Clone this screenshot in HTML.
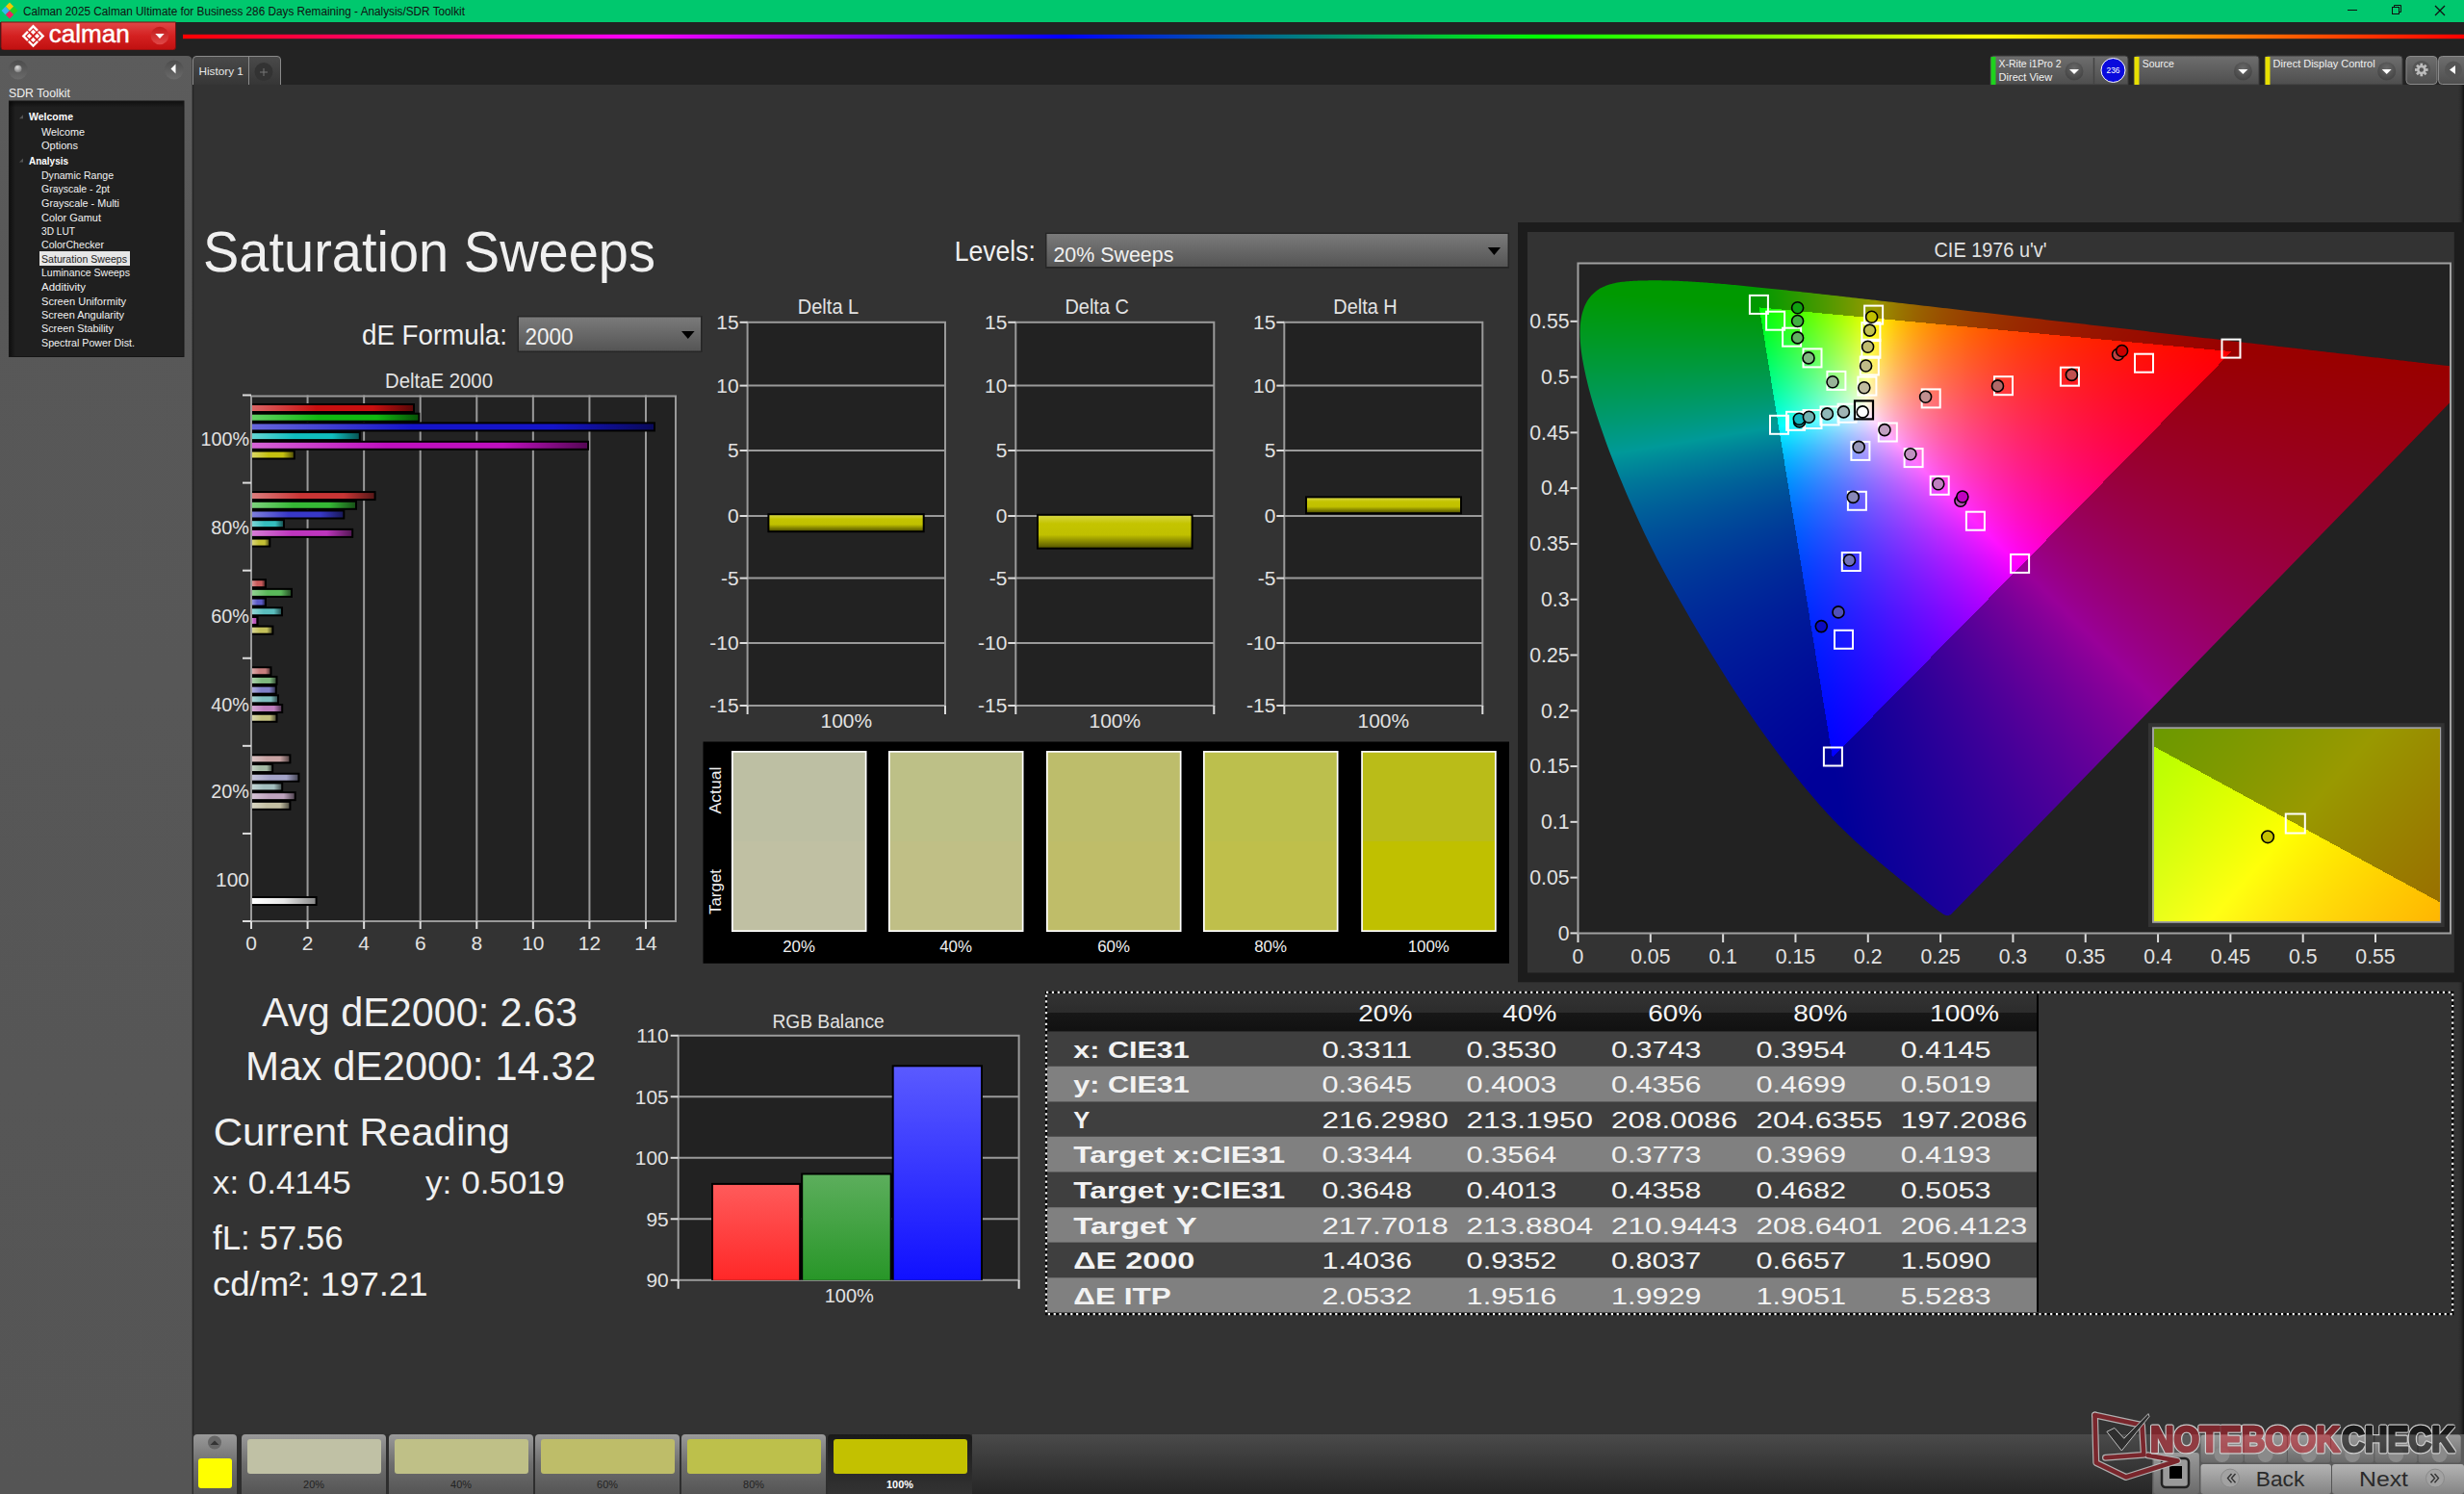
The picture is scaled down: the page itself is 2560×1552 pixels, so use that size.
<!DOCTYPE html>
<html><head><meta charset="utf-8"><title>Calman Saturation Sweeps</title>
<style>
html,body{margin:0;padding:0;background:#333;overflow:hidden;}
body{width:2560px;height:1552px;position:relative;font-family:"Liberation Sans", sans-serif;}
svg{position:absolute;left:0;top:0;}
svg text{font-family:"Liberation Sans", sans-serif;}
canvas{position:absolute;}
</style></head><body>
<svg width="2560" height="1552" viewBox="0 0 2560 1552">
<defs><linearGradient id="rainbow" x1="0" x2="1" y1="0" y2="0"><stop offset="0" stop-color="#ff0000"/><stop offset="0.201" stop-color="#ff00ff"/><stop offset="0.386" stop-color="#0000ff"/><stop offset="0.596" stop-color="#00ff00"/><stop offset="0.792" stop-color="#ffff00"/><stop offset="1" stop-color="#ff0000"/></linearGradient><linearGradient id="logo" x1="0" x2="0" y1="0" y2="1"><stop offset="0" stop-color="#e04848"/><stop offset="0.5" stop-color="#d42020"/><stop offset="1" stop-color="#c01010"/></linearGradient><linearGradient id="logodd" x1="0" x2="0" y1="0" y2="1"><stop offset="0" stop-color="#c01818"/><stop offset="1" stop-color="#e04848"/></linearGradient><linearGradient id="side" x1="0" x2="0" y1="0" y2="1"><stop offset="0" stop-color="#5c5c5c"/><stop offset="0.15" stop-color="#585858"/><stop offset="1" stop-color="#555555"/></linearGradient><linearGradient id="cbtn" x1="0" x2="0" y1="0" y2="1"><stop offset="0" stop-color="#4c4c4c"/><stop offset="1" stop-color="#6a6a6a"/></linearGradient><radialGradient id="ball" cx="0.4" cy="0.3" r="0.7"><stop offset="0" stop-color="#dedede"/><stop offset="1" stop-color="#7a7a7a"/></radialGradient><linearGradient id="tbsh" x1="0" x2="0" y1="0" y2="1"><stop offset="0" stop-color="#000" stop-opacity="0.5"/><stop offset="1" stop-color="#000" stop-opacity="0"/></linearGradient><linearGradient id="tbsl" x1="0" x2="1" y1="0" y2="0"><stop offset="0" stop-color="#000" stop-opacity="0.5"/><stop offset="1" stop-color="#000" stop-opacity="0"/></linearGradient><linearGradient id="tabg" x1="0" x2="0" y1="0" y2="1"><stop offset="0" stop-color="#4a4a4a"/><stop offset="1" stop-color="#363636"/></linearGradient><linearGradient id="redge" x1="0" x2="1" y1="0" y2="0"><stop offset="0" stop-color="#333" stop-opacity="0"/><stop offset="1" stop-color="#111"/></linearGradient><linearGradient id="ctl" x1="0" x2="0" y1="0" y2="1"><stop offset="0" stop-color="#6e6e6e"/><stop offset="1" stop-color="#4e4e4e"/></linearGradient><radialGradient id="ddc" cx="0.5" cy="0.35" r="0.6"><stop offset="0" stop-color="#6a6a6a"/><stop offset="1" stop-color="#454545"/></radialGradient><linearGradient id="dd" x1="0" x2="0" y1="0" y2="1"><stop offset="0" stop-color="#7a7a7a"/><stop offset="1" stop-color="#555555"/></linearGradient><linearGradient id="bg1" x1="0" x2="1" y1="0" y2="0"><stop offset="0" stop-color="#db6464"/><stop offset="0.4" stop-color="#c81010"/><stop offset="0.75" stop-color="#c81010"/><stop offset="1" stop-color="#5a0707"/></linearGradient><linearGradient id="bg2" x1="0" x2="1" y1="0" y2="0"><stop offset="0" stop-color="#64d164"/><stop offset="0.4" stop-color="#10b810"/><stop offset="0.75" stop-color="#10b810"/><stop offset="1" stop-color="#075307"/></linearGradient><linearGradient id="bg3" x1="0" x2="1" y1="0" y2="0"><stop offset="0" stop-color="#6666db"/><stop offset="0.4" stop-color="#1414c8"/><stop offset="0.75" stop-color="#1414c8"/><stop offset="1" stop-color="#09095a"/></linearGradient><linearGradient id="bg4" x1="0" x2="1" y1="0" y2="0"><stop offset="0" stop-color="#64d5d5"/><stop offset="0.4" stop-color="#10bebe"/><stop offset="0.75" stop-color="#10bebe"/><stop offset="1" stop-color="#075656"/></linearGradient><linearGradient id="bg5" x1="0" x2="1" y1="0" y2="0"><stop offset="0" stop-color="#d564d5"/><stop offset="0.4" stop-color="#be10be"/><stop offset="0.75" stop-color="#be10be"/><stop offset="1" stop-color="#560756"/></linearGradient><linearGradient id="bg6" x1="0" x2="1" y1="0" y2="0"><stop offset="0" stop-color="#d9d664"/><stop offset="0.4" stop-color="#c4c010"/><stop offset="0.75" stop-color="#c4c010"/><stop offset="1" stop-color="#585607"/></linearGradient><linearGradient id="bg7" x1="0" x2="1" y1="0" y2="0"><stop offset="0" stop-color="#db7c7c"/><stop offset="0.4" stop-color="#c83535"/><stop offset="0.75" stop-color="#c83535"/><stop offset="1" stop-color="#5a1818"/></linearGradient><linearGradient id="bg8" x1="0" x2="1" y1="0" y2="0"><stop offset="0" stop-color="#7cd17c"/><stop offset="0.4" stop-color="#35b835"/><stop offset="0.75" stop-color="#35b835"/><stop offset="1" stop-color="#185318"/></linearGradient><linearGradient id="bg9" x1="0" x2="1" y1="0" y2="0"><stop offset="0" stop-color="#7e7edb"/><stop offset="0.4" stop-color="#3838c8"/><stop offset="0.75" stop-color="#3838c8"/><stop offset="1" stop-color="#19195a"/></linearGradient><linearGradient id="bg10" x1="0" x2="1" y1="0" y2="0"><stop offset="0" stop-color="#7cd5d5"/><stop offset="0.4" stop-color="#35bebe"/><stop offset="0.75" stop-color="#35bebe"/><stop offset="1" stop-color="#185656"/></linearGradient><linearGradient id="bg11" x1="0" x2="1" y1="0" y2="0"><stop offset="0" stop-color="#d57cd5"/><stop offset="0.4" stop-color="#be35be"/><stop offset="0.75" stop-color="#be35be"/><stop offset="1" stop-color="#561856"/></linearGradient><linearGradient id="bg12" x1="0" x2="1" y1="0" y2="0"><stop offset="0" stop-color="#d9d67c"/><stop offset="0.4" stop-color="#c4c035"/><stop offset="0.75" stop-color="#c4c035"/><stop offset="1" stop-color="#585618"/></linearGradient><linearGradient id="bg13" x1="0" x2="1" y1="0" y2="0"><stop offset="0" stop-color="#db9393"/><stop offset="0.4" stop-color="#c85a5a"/><stop offset="0.75" stop-color="#c85a5a"/><stop offset="1" stop-color="#5a2828"/></linearGradient><linearGradient id="bg14" x1="0" x2="1" y1="0" y2="0"><stop offset="0" stop-color="#93d193"/><stop offset="0.4" stop-color="#5ab85a"/><stop offset="0.75" stop-color="#5ab85a"/><stop offset="1" stop-color="#285328"/></linearGradient><linearGradient id="bg15" x1="0" x2="1" y1="0" y2="0"><stop offset="0" stop-color="#9595db"/><stop offset="0.4" stop-color="#5c5cc8"/><stop offset="0.75" stop-color="#5c5cc8"/><stop offset="1" stop-color="#29295a"/></linearGradient><linearGradient id="bg16" x1="0" x2="1" y1="0" y2="0"><stop offset="0" stop-color="#93d5d5"/><stop offset="0.4" stop-color="#5abebe"/><stop offset="0.75" stop-color="#5abebe"/><stop offset="1" stop-color="#285656"/></linearGradient><linearGradient id="bg17" x1="0" x2="1" y1="0" y2="0"><stop offset="0" stop-color="#d593d5"/><stop offset="0.4" stop-color="#be5abe"/><stop offset="0.75" stop-color="#be5abe"/><stop offset="1" stop-color="#562856"/></linearGradient><linearGradient id="bg18" x1="0" x2="1" y1="0" y2="0"><stop offset="0" stop-color="#d9d693"/><stop offset="0.4" stop-color="#c4c05a"/><stop offset="0.75" stop-color="#c4c05a"/><stop offset="1" stop-color="#585628"/></linearGradient><linearGradient id="bg19" x1="0" x2="1" y1="0" y2="0"><stop offset="0" stop-color="#dbabab"/><stop offset="0.4" stop-color="#c87e7e"/><stop offset="0.75" stop-color="#c87e7e"/><stop offset="1" stop-color="#5a3939"/></linearGradient><linearGradient id="bg20" x1="0" x2="1" y1="0" y2="0"><stop offset="0" stop-color="#abd1ab"/><stop offset="0.4" stop-color="#7eb87e"/><stop offset="0.75" stop-color="#7eb87e"/><stop offset="1" stop-color="#395339"/></linearGradient><linearGradient id="bg21" x1="0" x2="1" y1="0" y2="0"><stop offset="0" stop-color="#acacdb"/><stop offset="0.4" stop-color="#8080c8"/><stop offset="0.75" stop-color="#8080c8"/><stop offset="1" stop-color="#3a3a5a"/></linearGradient><linearGradient id="bg22" x1="0" x2="1" y1="0" y2="0"><stop offset="0" stop-color="#abd5d5"/><stop offset="0.4" stop-color="#7ebebe"/><stop offset="0.75" stop-color="#7ebebe"/><stop offset="1" stop-color="#395656"/></linearGradient><linearGradient id="bg23" x1="0" x2="1" y1="0" y2="0"><stop offset="0" stop-color="#d5abd5"/><stop offset="0.4" stop-color="#be7ebe"/><stop offset="0.75" stop-color="#be7ebe"/><stop offset="1" stop-color="#563956"/></linearGradient><linearGradient id="bg24" x1="0" x2="1" y1="0" y2="0"><stop offset="0" stop-color="#d9d6ab"/><stop offset="0.4" stop-color="#c4c07e"/><stop offset="0.75" stop-color="#c4c07e"/><stop offset="1" stop-color="#585639"/></linearGradient><linearGradient id="bg25" x1="0" x2="1" y1="0" y2="0"><stop offset="0" stop-color="#dbc3c3"/><stop offset="0.4" stop-color="#c8a3a3"/><stop offset="0.75" stop-color="#c8a3a3"/><stop offset="1" stop-color="#5a4949"/></linearGradient><linearGradient id="bg26" x1="0" x2="1" y1="0" y2="0"><stop offset="0" stop-color="#c3d1c3"/><stop offset="0.4" stop-color="#a3b8a3"/><stop offset="0.75" stop-color="#a3b8a3"/><stop offset="1" stop-color="#495349"/></linearGradient><linearGradient id="bg27" x1="0" x2="1" y1="0" y2="0"><stop offset="0" stop-color="#c4c4db"/><stop offset="0.4" stop-color="#a4a4c8"/><stop offset="0.75" stop-color="#a4a4c8"/><stop offset="1" stop-color="#4a4a5a"/></linearGradient><linearGradient id="bg28" x1="0" x2="1" y1="0" y2="0"><stop offset="0" stop-color="#c3d5d5"/><stop offset="0.4" stop-color="#a3bebe"/><stop offset="0.75" stop-color="#a3bebe"/><stop offset="1" stop-color="#495656"/></linearGradient><linearGradient id="bg29" x1="0" x2="1" y1="0" y2="0"><stop offset="0" stop-color="#d5c3d5"/><stop offset="0.4" stop-color="#bea3be"/><stop offset="0.75" stop-color="#bea3be"/><stop offset="1" stop-color="#564956"/></linearGradient><linearGradient id="bg30" x1="0" x2="1" y1="0" y2="0"><stop offset="0" stop-color="#d9d6c3"/><stop offset="0.4" stop-color="#c4c0a3"/><stop offset="0.75" stop-color="#c4c0a3"/><stop offset="1" stop-color="#585649"/></linearGradient><linearGradient id="bgw" x1="0" x2="1" y1="0" y2="0"><stop offset="0" stop-color="#ffffff"/><stop offset="0.5" stop-color="#e6e6e6"/><stop offset="1" stop-color="#8a8a8a"/></linearGradient><linearGradient id="ybar" x1="0" x2="0" y1="0" y2="1"><stop offset="0" stop-color="#d6d640"/><stop offset="0.25" stop-color="#c4c400"/><stop offset="0.6" stop-color="#c0c000"/><stop offset="1" stop-color="#5a5a00"/></linearGradient><linearGradient id="rbr" x1="0" x2="0" y1="0" y2="1"><stop offset="0" stop-color="#ff5a5a"/><stop offset="1" stop-color="#ff2828"/></linearGradient><linearGradient id="rbg" x1="0" x2="0" y1="0" y2="1"><stop offset="0" stop-color="#5cae5c"/><stop offset="1" stop-color="#289628"/></linearGradient><linearGradient id="rbb" x1="0" x2="0" y1="0" y2="1"><stop offset="0" stop-color="#5a5aff"/><stop offset="1" stop-color="#1010ff"/></linearGradient><linearGradient id="thead" x1="0" x2="0" y1="0" y2="1"><stop offset="0" stop-color="#333"/><stop offset="0.5" stop-color="#2c2c2c"/><stop offset="0.52" stop-color="#171717"/><stop offset="1" stop-color="#111111"/></linearGradient><clipPath id="cieclip"><rect x="1640" y="274" width="906" height="695"/></clipPath><linearGradient id="fbout" x1="0" y1="0" x2="1" y2="1"><stop offset="0" stop-color="#009a10"/><stop offset="0.35" stop-color="#008a8a"/><stop offset="0.6" stop-color="#10009a"/><stop offset="1" stop-color="#9a0030"/></linearGradient><linearGradient id="fbr" gradientUnits="userSpaceOnUse" x1="2318.4" y1="365.1" x2="1865.8" y2="553.2"><stop offset="0" stop-color="#ff0000"/><stop offset="0.5" stop-color="#ff0000"/><stop offset="1" stop-color="#000"/></linearGradient><linearGradient id="fbg" gradientUnits="userSpaceOnUse" x1="1827.8" y1="319.4" x2="2111.1" y2="576.0"><stop offset="0" stop-color="#00ff00"/><stop offset="0.5" stop-color="#00ff00"/><stop offset="1" stop-color="#000"/></linearGradient><linearGradient id="fbb" gradientUnits="userSpaceOnUse" x1="1903.7" y1="786.9" x2="2073.1" y2="342.3"><stop offset="0" stop-color="#0000ff"/><stop offset="0.5" stop-color="#0000ff"/><stop offset="1" stop-color="#000"/></linearGradient><linearGradient id="fog" gradientUnits="userSpaceOnUse" x1="1650.0" y1="300.0" x2="2150.0" y2="700.0"><stop offset="0" stop-color="#009900"/><stop offset="0.35" stop-color="#009900"/><stop offset="1" stop-color="#000"/></linearGradient><linearGradient id="for" gradientUnits="userSpaceOnUse" x1="2546.0" y1="378.0" x2="1900.0" y2="600.0"><stop offset="0" stop-color="#990000"/><stop offset="0.35" stop-color="#990000"/><stop offset="1" stop-color="#000"/></linearGradient><linearGradient id="fob" gradientUnits="userSpaceOnUse" x1="2000.0" y1="900.0" x2="1750.0" y2="350.0"><stop offset="0" stop-color="#000099"/><stop offset="0.35" stop-color="#000099"/><stop offset="1" stop-color="#000"/></linearGradient><radialGradient id="fbw" gradientUnits="userSpaceOnUse" cx="1937.5" cy="428.2" r="90"><stop offset="0" stop-color="#fff" stop-opacity="0.9"/><stop offset="1" stop-color="#fff" stop-opacity="0"/></radialGradient><linearGradient id="insout" x1="0" y1="0" x2="1" y2="1"><stop offset="0" stop-color="#6a9a00"/><stop offset="0.5" stop-color="#949a00"/><stop offset="1" stop-color="#9a7400"/></linearGradient><linearGradient id="insin" x1="0" y1="0" x2="1" y2="1"><stop offset="0" stop-color="#b0ff00"/><stop offset="0.45" stop-color="#ffff10"/><stop offset="1" stop-color="#ffb000"/></linearGradient><linearGradient id="bstrip" x1="0" x2="0" y1="0" y2="1"><stop offset="0" stop-color="#3a3a3a"/><stop offset="1" stop-color="#262626"/></linearGradient><linearGradient id="tile" x1="0" x2="0" y1="0" y2="1"><stop offset="0" stop-color="#9a9a9a"/><stop offset="0.5" stop-color="#6e6e6e"/><stop offset="1" stop-color="#555"/></linearGradient><linearGradient id="tilesel" x1="0" x2="0" y1="0" y2="1"><stop offset="0" stop-color="#1a1a1a"/><stop offset="1" stop-color="#333"/></linearGradient><linearGradient id="brp" x1="0" x2="0" y1="0" y2="1"><stop offset="0" stop-color="#4a4a4a"/><stop offset="1" stop-color="#262626"/></linearGradient><linearGradient id="btn" x1="0" x2="0" y1="0" y2="1"><stop offset="0" stop-color="#b4b4b4"/><stop offset="1" stop-color="#848484"/></linearGradient><linearGradient id="sbtn" x1="0" x2="0" y1="0" y2="1"><stop offset="0" stop-color="#9a9a9a"/><stop offset="1" stop-color="#6a6a6a"/></linearGradient><mask id="nbm" maskUnits="userSpaceOnUse" x="2100" y="1440" width="460" height="112"><rect x="2100" y="1440" width="460" height="112" fill="#fff"/><text x="2234" y="1508.3" font-size="37.79" font-weight="bold" textLength="197" lengthAdjust="spacingAndGlyphs" fill="#000" stroke="#000" stroke-width="2.6">NOTEBOOK</text><text x="2433" y="1508.3" font-size="37.79" font-weight="bold" textLength="117" lengthAdjust="spacingAndGlyphs" fill="#000" stroke="#000" stroke-width="2.6">CHECK</text></mask></defs>
<rect x="0.00" y="0.00" width="2560.00" height="23.00" fill="#00c86e" />
<g transform="translate(10,11)"><path d="M0 -8.5 L4.2 -4.3 L0 -0.1 L-4.2 -4.3 Z" fill="#f5c800"/><path d="M-4.3 -4.2 L-0.1 0 L-4.3 4.2 L-8.5 0 Z" fill="#35b8f0"/><path d="M4.3 -4.2 L8.5 0 L4.3 4.2 L0.1 0 Z" fill="#22d022"/><path d="M0 0.1 L4.2 4.3 L0 8.5 L-4.2 4.3 Z" fill="#f02060"/></g>
<text x="24.00" y="15.60" font-size="12.50" fill="#111" text-anchor="start" textLength="459.00" lengthAdjust="spacingAndGlyphs" >Calman 2025 Calman Ultimate for Business 286 Days Remaining  - Analysis/SDR Toolkit</text>
<line x1="2439.00" y1="10.50" x2="2449.00" y2="10.50" stroke="#111" stroke-width="1" />
<rect x="2485.5" y="7.5" width="7" height="7" fill="none" stroke="#111" stroke-width="1"/><path d="M2487.5 7.5 v-2 h7 v7 h-2" fill="none" stroke="#111" stroke-width="1"/>
<line x1="2530.00" y1="6.00" x2="2540.00" y2="16.00" stroke="#111" stroke-width="1.2" />
<line x1="2540.00" y1="6.00" x2="2530.00" y2="16.00" stroke="#111" stroke-width="1.2" />
<rect x="0.00" y="23.00" width="2560.00" height="35.00" fill="#222222" />
<rect x="190.00" y="35.80" width="2370.00" height="4.40" fill="url(#rainbow)" />
<path d="M1 23 H182.5 V49 Q182.5 52 179.5 52 H4 Q1 52 1 49 Z" fill="url(#logo)" stroke="#7a1010" stroke-width="1"/>
<g transform="translate(34.5,37.4) rotate(45)"><rect x="-7.2" y="-7.2" width="14.4" height="14.4" fill="none" stroke="#fff" stroke-width="2.4"/><rect x="-0.6" y="-9" width="1.2" height="18" fill="#d42424"/><rect x="-9" y="-0.6" width="18" height="1.2" fill="#d42424"/><rect x="-4.7" y="-4.7" width="3.7" height="3.7" fill="#fff"/><rect x="1.0" y="-4.7" width="3.7" height="3.7" fill="#fff"/><rect x="-4.7" y="1.0" width="3.7" height="3.7" fill="#fff"/><rect x="1.0" y="1.0" width="3.7" height="3.7" fill="#fff"/></g>
<text x="50.80" y="44.20" font-size="26.02" fill="#ffffff" text-anchor="start" textLength="84.00" lengthAdjust="spacingAndGlyphs" stroke="#fff" stroke-width="0.45">calman</text>
<circle cx="166" cy="37" r="9.3" fill="url(#logodd)"/><path d="M161.3 35 h9.4 l-4.7 5 z" fill="#fff"/>
<rect x="0.00" y="52.00" width="2560.00" height="36.00" fill="#232323" />
<path d="M0 58 H194 Q199.5 58 199.5 63 V1552 H0 Z" fill="url(#side)"/>
<circle cx="18.8" cy="72.5" r="10" fill="url(#cbtn)"/><circle cx="18.8" cy="71.5" r="3.8" fill="url(#ball)"/>
<circle cx="180.8" cy="72.5" r="10" fill="url(#cbtn)"/><path d="M177.5 71.5 L182.5 66.5 V76.5 Z" fill="#fff"/>
<text x="9.00" y="100.80" font-size="13.37" fill="#f0f0f0" text-anchor="start" textLength="64.00" lengthAdjust="spacingAndGlyphs" >SDR Toolkit</text>
<rect x="9.50" y="105.00" width="181.50" height="265.50" fill="#1f1f1f" stroke="#151515" stroke-width="1"/>
<rect x="10.00" y="105.50" width="180.50" height="6.00" fill="url(#tbsh)" />
<rect x="10.00" y="105.50" width="6.00" height="264.50" fill="url(#tbsl)" />
<path d="M20 123.2 l4 -4 v4 z" fill="#555"/>
<text x="30.00" y="125.20" font-size="11.05" font-weight="bold" fill="#ffffff" text-anchor="start" textLength="46.00" lengthAdjust="spacingAndGlyphs" >Welcome</text>
<text x="43.00" y="141.30" font-size="11.05" fill="#f2f2f2" text-anchor="start" textLength="45.00" lengthAdjust="spacingAndGlyphs" >Welcome</text>
<text x="43.00" y="155.00" font-size="11.05" fill="#f2f2f2" text-anchor="start" textLength="38.00" lengthAdjust="spacingAndGlyphs" >Options</text>
<path d="M20 168.5 l4 -4 v4 z" fill="#555"/>
<text x="30.00" y="170.50" font-size="11.05" font-weight="bold" fill="#ffffff" text-anchor="start" textLength="41.00" lengthAdjust="spacingAndGlyphs" >Analysis</text>
<text x="43.00" y="185.90" font-size="11.05" fill="#f2f2f2" text-anchor="start" textLength="75.00" lengthAdjust="spacingAndGlyphs" >Dynamic Range</text>
<text x="43.00" y="200.30" font-size="11.05" fill="#f2f2f2" text-anchor="start" textLength="71.00" lengthAdjust="spacingAndGlyphs" >Grayscale - 2pt</text>
<text x="43.00" y="215.00" font-size="11.05" fill="#f2f2f2" text-anchor="start" textLength="81.00" lengthAdjust="spacingAndGlyphs" >Grayscale - Multi</text>
<text x="43.00" y="229.80" font-size="11.05" fill="#f2f2f2" text-anchor="start" textLength="62.00" lengthAdjust="spacingAndGlyphs" >Color Gamut</text>
<text x="43.00" y="244.00" font-size="11.05" fill="#f2f2f2" text-anchor="start" textLength="35.00" lengthAdjust="spacingAndGlyphs" >3D LUT</text>
<text x="43.00" y="258.40" font-size="11.05" fill="#f2f2f2" text-anchor="start" textLength="65.00" lengthAdjust="spacingAndGlyphs" >ColorChecker</text>
<rect x="41.00" y="261.00" width="94.00" height="15.00" fill="#e6e6e6" />
<text x="43.00" y="272.80" font-size="11.05" fill="#222" text-anchor="start" textLength="89.00" lengthAdjust="spacingAndGlyphs" >Saturation Sweeps</text>
<text x="43.00" y="286.90" font-size="11.05" fill="#f2f2f2" text-anchor="start" textLength="92.00" lengthAdjust="spacingAndGlyphs" >Luminance Sweeps</text>
<text x="43.00" y="301.80" font-size="11.05" fill="#f2f2f2" text-anchor="start" textLength="46.00" lengthAdjust="spacingAndGlyphs" >Additivity</text>
<text x="43.00" y="316.70" font-size="11.05" fill="#f2f2f2" text-anchor="start" textLength="88.00" lengthAdjust="spacingAndGlyphs" >Screen Uniformity</text>
<text x="43.00" y="330.50" font-size="11.05" fill="#f2f2f2" text-anchor="start" textLength="86.00" lengthAdjust="spacingAndGlyphs" >Screen Angularity</text>
<text x="43.00" y="345.40" font-size="11.05" fill="#f2f2f2" text-anchor="start" textLength="75.00" lengthAdjust="spacingAndGlyphs" >Screen Stability</text>
<text x="43.00" y="360.30" font-size="11.05" fill="#f2f2f2" text-anchor="start" textLength="97.00" lengthAdjust="spacingAndGlyphs" >Spectral Power Dist.</text>
<path d="M200.5 88 V62 Q200.5 58.5 204 58.5 H288 Q291.5 58.5 291.5 62 V88" fill="url(#tabg)" stroke="#8a8a8a" stroke-width="1"/>
<line x1="258.50" y1="58.50" x2="258.50" y2="88.00" stroke="#8a8a8a" stroke-width="1" />
<text x="206.40" y="77.80" font-size="11.34" fill="#e8e8e8" text-anchor="start" textLength="46.50" lengthAdjust="spacingAndGlyphs" >History 1</text>
<circle cx="274" cy="74.5" r="9.5" fill="#333"/><path d="M270 75 h8 M274 71 v8" stroke="#777" stroke-width="1"/>
<rect x="200.00" y="88.00" width="2360.00" height="1402.00" fill="#333333" />
<rect x="2553.00" y="88.00" width="7.00" height="1402.00" fill="url(#redge)" />
<rect x="200.00" y="88.00" width="1.20" height="1464.00" fill="#252525" />
<path d="M2068 88 V61 Q2068 58 2071 58 H2208 Q2211 58 2211 61 V88 Z" fill="url(#ctl)" stroke="#3a3a3a" stroke-width="1"/>
<rect x="2068.50" y="59.00" width="5.00" height="29.00" fill="#1ed21e" />
<text x="2076.60" y="69.80" font-size="11.05" fill="#f2f2f2" text-anchor="start" textLength="65.00" lengthAdjust="spacingAndGlyphs" >X-Rite i1Pro 2</text>
<text x="2076.60" y="83.60" font-size="11.05" fill="#f2f2f2" text-anchor="start" textLength="55.50" lengthAdjust="spacingAndGlyphs" >Direct View</text>
<circle cx="2155" cy="74" r="9.5" fill="url(#ddc)"/><path d="M2150 72 h10 l-5 5 z" fill="#fff"/>
<line x1="2175.50" y1="60.00" x2="2175.50" y2="88.00" stroke="#444" stroke-width="1.5" />
<circle cx="2195.5" cy="73" r="12.5" fill="#0a0adc" stroke="#fff" stroke-width="1"/>
<text x="2195.50" y="76.00" font-size="9.01" fill="#fff" text-anchor="middle" textLength="14.00" lengthAdjust="spacingAndGlyphs" >236</text>
<path d="M2217 88 V61 Q2217 58 2220 58 H2344 Q2347 58 2347 61 V88 Z" fill="url(#ctl)" stroke="#3a3a3a" stroke-width="1"/>
<rect x="2217.50" y="59.00" width="5.00" height="29.00" fill="#e8e000" />
<text x="2225.70" y="69.80" font-size="11.05" fill="#f2f2f2" text-anchor="start" textLength="33.00" lengthAdjust="spacingAndGlyphs" >Source</text>
<circle cx="2330.4" cy="74" r="9.5" fill="url(#ddc)"/><path d="M2325.4 72 h10 l-5 5 z" fill="#fff"/>
<path d="M2353 88 V61 Q2353 58 2356 58 H2493 Q2496 58 2496 61 V88 Z" fill="url(#ctl)" stroke="#3a3a3a" stroke-width="1"/>
<rect x="2353.50" y="59.00" width="5.00" height="29.00" fill="#e8e000" />
<text x="2361.60" y="69.80" font-size="11.05" fill="#f2f2f2" text-anchor="start" textLength="106.00" lengthAdjust="spacingAndGlyphs" >Direct Display Control</text>
<circle cx="2479.7" cy="74" r="9.5" fill="url(#ddc)"/><path d="M2474.7 72 h10 l-5 5 z" fill="#fff"/>
<rect x="2500" y="58.5" width="32" height="29" rx="4" fill="url(#ctl)" stroke="#8a8a8a" stroke-width="1"/>
<circle cx="2515.8" cy="72.5" r="9.5" fill="#555"/>
<g transform="translate(2515.8,72.5) scale(0.85)" fill="#bdbdbd"><rect x="-1.6" y="-8" width="3.2" height="4" transform="rotate(0)"/><rect x="-1.6" y="-8" width="3.2" height="4" transform="rotate(45)"/><rect x="-1.6" y="-8" width="3.2" height="4" transform="rotate(90)"/><rect x="-1.6" y="-8" width="3.2" height="4" transform="rotate(135)"/><rect x="-1.6" y="-8" width="3.2" height="4" transform="rotate(180)"/><rect x="-1.6" y="-8" width="3.2" height="4" transform="rotate(225)"/><rect x="-1.6" y="-8" width="3.2" height="4" transform="rotate(270)"/><rect x="-1.6" y="-8" width="3.2" height="4" transform="rotate(315)"/><circle r="5.6"/><circle r="2.6" fill="#555"/></g>
<rect x="2533.5" y="58.5" width="32" height="29" rx="4" fill="url(#ctl)" stroke="#8a8a8a" stroke-width="1"/>
<circle cx="2549" cy="72.5" r="9" fill="#555"/><path d="M2545 72.5 L2551 68 V77 Z" fill="#fff"/>
<text x="211.00" y="281.80" font-size="58.43" fill="#f0f0f0" text-anchor="start" textLength="470.00" lengthAdjust="spacingAndGlyphs" >Saturation Sweeps</text>
<text x="991.70" y="271.00" font-size="29.51" fill="#f0f0f0" text-anchor="start" textLength="84.30" lengthAdjust="spacingAndGlyphs" >Levels:</text>
<rect x="1086.00" y="241.70" width="482.00" height="37.00" fill="#262626" />
<rect x="1087.50" y="243.00" width="479.00" height="34.00" fill="url(#dd)" />
<text x="1094.40" y="271.90" font-size="22.97" fill="#f0f0f0" text-anchor="start" textLength="125.00" lengthAdjust="spacingAndGlyphs" >20% Sweeps</text>
<path d="M1545.8 256.9 H1559 L1552.4 265 Z" fill="#000"/>
<text x="376.00" y="357.50" font-size="29.80" fill="#f0f0f0" text-anchor="start" textLength="151.00" lengthAdjust="spacingAndGlyphs" >dE Formula:</text>
<rect x="537.60" y="328.00" width="192.00" height="38.00" fill="#262626" />
<rect x="539.00" y="329.50" width="189.00" height="35.00" fill="url(#dd)" />
<text x="545.50" y="357.50" font-size="23.26" fill="#f0f0f0" text-anchor="start" textLength="50.00" lengthAdjust="spacingAndGlyphs" >2000</text>
<path d="M708 344 H721.6 L714.8 352 Z" fill="#000"/>
<text x="400.00" y="403.00" font-size="21.80" fill="#e2e2e2" text-anchor="start" textLength="112.00" lengthAdjust="spacingAndGlyphs" >DeltaE 2000</text>
<rect x="261.00" y="410.50" width="441.00" height="546.50" fill="#222222" />
<line x1="319.57" y1="410.50" x2="319.57" y2="957.00" stroke="#9a9a9a" stroke-width="2" />
<line x1="378.14" y1="410.50" x2="378.14" y2="957.00" stroke="#9a9a9a" stroke-width="2" />
<line x1="436.71" y1="410.50" x2="436.71" y2="957.00" stroke="#9a9a9a" stroke-width="2" />
<line x1="495.29" y1="410.50" x2="495.29" y2="957.00" stroke="#9a9a9a" stroke-width="2" />
<line x1="553.86" y1="410.50" x2="553.86" y2="957.00" stroke="#9a9a9a" stroke-width="2" />
<line x1="612.43" y1="410.50" x2="612.43" y2="957.00" stroke="#9a9a9a" stroke-width="2" />
<line x1="671.00" y1="410.50" x2="671.00" y2="957.00" stroke="#9a9a9a" stroke-width="2" />
<rect x="261" y="411.5" width="441" height="545.5" fill="none" stroke="#9a9a9a" stroke-width="2"/>
<line x1="252.00" y1="410.50" x2="261.00" y2="410.50" stroke="#dddddd" stroke-width="2" />
<line x1="252.00" y1="501.58" x2="261.00" y2="501.58" stroke="#dddddd" stroke-width="2" />
<line x1="252.00" y1="592.67" x2="261.00" y2="592.67" stroke="#dddddd" stroke-width="2" />
<line x1="252.00" y1="683.75" x2="261.00" y2="683.75" stroke="#dddddd" stroke-width="2" />
<line x1="252.00" y1="774.83" x2="261.00" y2="774.83" stroke="#dddddd" stroke-width="2" />
<line x1="252.00" y1="865.92" x2="261.00" y2="865.92" stroke="#dddddd" stroke-width="2" />
<line x1="252.00" y1="957.00" x2="261.00" y2="957.00" stroke="#dddddd" stroke-width="2" />
<line x1="261.00" y1="957.00" x2="261.00" y2="965.00" stroke="#dddddd" stroke-width="2" />
<text x="261.00" y="986.50" font-size="20.93" fill="#e2e2e2" text-anchor="middle" >0</text>
<line x1="319.57" y1="957.00" x2="319.57" y2="965.00" stroke="#dddddd" stroke-width="2" />
<text x="319.57" y="986.50" font-size="20.93" fill="#e2e2e2" text-anchor="middle" >2</text>
<line x1="378.14" y1="957.00" x2="378.14" y2="965.00" stroke="#dddddd" stroke-width="2" />
<text x="378.14" y="986.50" font-size="20.93" fill="#e2e2e2" text-anchor="middle" >4</text>
<line x1="436.71" y1="957.00" x2="436.71" y2="965.00" stroke="#dddddd" stroke-width="2" />
<text x="436.71" y="986.50" font-size="20.93" fill="#e2e2e2" text-anchor="middle" >6</text>
<line x1="495.29" y1="957.00" x2="495.29" y2="965.00" stroke="#dddddd" stroke-width="2" />
<text x="495.29" y="986.50" font-size="20.93" fill="#e2e2e2" text-anchor="middle" >8</text>
<line x1="553.86" y1="957.00" x2="553.86" y2="965.00" stroke="#dddddd" stroke-width="2" />
<text x="553.86" y="986.50" font-size="20.93" fill="#e2e2e2" text-anchor="middle" >10</text>
<line x1="612.43" y1="957.00" x2="612.43" y2="965.00" stroke="#dddddd" stroke-width="2" />
<text x="612.43" y="986.50" font-size="20.93" fill="#e2e2e2" text-anchor="middle" >12</text>
<line x1="671.00" y1="957.00" x2="671.00" y2="965.00" stroke="#dddddd" stroke-width="2" />
<text x="671.00" y="986.50" font-size="20.93" fill="#e2e2e2" text-anchor="middle" >14</text>
<text x="259.00" y="463.00" font-size="20.93" fill="#e2e2e2" text-anchor="end" textLength="50.60" lengthAdjust="spacingAndGlyphs" >100%</text>
<text x="259.00" y="555.00" font-size="20.93" fill="#e2e2e2" text-anchor="end" textLength="39.70" lengthAdjust="spacingAndGlyphs" >80%</text>
<text x="259.00" y="647.00" font-size="20.93" fill="#e2e2e2" text-anchor="end" textLength="39.70" lengthAdjust="spacingAndGlyphs" >60%</text>
<text x="259.00" y="738.60" font-size="20.93" fill="#e2e2e2" text-anchor="end" textLength="39.70" lengthAdjust="spacingAndGlyphs" >40%</text>
<text x="259.00" y="828.60" font-size="20.93" fill="#e2e2e2" text-anchor="end" textLength="39.70" lengthAdjust="spacingAndGlyphs" >20%</text>
<text x="259.00" y="920.70" font-size="20.93" fill="#e2e2e2" text-anchor="end" textLength="35.00" lengthAdjust="spacingAndGlyphs" >100</text>
<rect x="262.00" y="419.00" width="169.00" height="10.00" fill="#000" />
<rect x="262.00" y="421.00" width="167.00" height="6.00" fill="url(#bg1)" />
<rect x="262.00" y="428.70" width="174.40" height="10.00" fill="#000" />
<rect x="262.00" y="430.70" width="172.40" height="6.00" fill="url(#bg2)" />
<rect x="262.00" y="438.40" width="419.00" height="10.00" fill="#000" />
<rect x="262.00" y="440.40" width="417.00" height="6.00" fill="url(#bg3)" />
<rect x="262.00" y="448.10" width="112.80" height="10.00" fill="#000" />
<rect x="262.00" y="450.10" width="110.80" height="6.00" fill="url(#bg4)" />
<rect x="262.00" y="457.80" width="350.00" height="10.00" fill="#000" />
<rect x="262.00" y="459.80" width="348.00" height="6.00" fill="url(#bg5)" />
<rect x="262.00" y="467.50" width="44.80" height="10.00" fill="#000" />
<rect x="262.00" y="469.50" width="42.80" height="6.00" fill="url(#bg6)" />
<rect x="262.00" y="510.08" width="128.60" height="10.00" fill="#000" />
<rect x="262.00" y="512.08" width="126.60" height="6.00" fill="url(#bg7)" />
<rect x="262.00" y="519.78" width="109.00" height="10.00" fill="#000" />
<rect x="262.00" y="521.78" width="107.00" height="6.00" fill="url(#bg8)" />
<rect x="262.00" y="529.48" width="96.30" height="10.00" fill="#000" />
<rect x="262.00" y="531.48" width="94.30" height="6.00" fill="url(#bg9)" />
<rect x="262.00" y="539.18" width="34.00" height="10.00" fill="#000" />
<rect x="262.00" y="541.18" width="32.00" height="6.00" fill="url(#bg10)" />
<rect x="262.00" y="548.88" width="105.20" height="10.00" fill="#000" />
<rect x="262.00" y="550.88" width="103.20" height="6.00" fill="url(#bg11)" />
<rect x="262.00" y="558.58" width="19.30" height="10.00" fill="#000" />
<rect x="262.00" y="560.58" width="17.30" height="6.00" fill="url(#bg12)" />
<rect x="262.00" y="601.17" width="15.00" height="10.00" fill="#000" />
<rect x="262.00" y="603.17" width="13.00" height="6.00" fill="url(#bg13)" />
<rect x="262.00" y="610.87" width="42.00" height="10.00" fill="#000" />
<rect x="262.00" y="612.87" width="40.00" height="6.00" fill="url(#bg14)" />
<rect x="262.00" y="620.57" width="15.00" height="10.00" fill="#000" />
<rect x="262.00" y="622.57" width="13.00" height="6.00" fill="url(#bg15)" />
<rect x="262.00" y="630.27" width="32.00" height="10.00" fill="#000" />
<rect x="262.00" y="632.27" width="30.00" height="6.00" fill="url(#bg16)" />
<rect x="262.00" y="639.97" width="6.60" height="10.00" fill="#000" />
<rect x="262.00" y="641.97" width="4.60" height="6.00" fill="url(#bg17)" />
<rect x="262.00" y="649.67" width="22.40" height="10.00" fill="#000" />
<rect x="262.00" y="651.67" width="20.40" height="6.00" fill="url(#bg18)" />
<rect x="262.00" y="692.25" width="20.50" height="10.00" fill="#000" />
<rect x="262.00" y="694.25" width="18.50" height="6.00" fill="url(#bg19)" />
<rect x="262.00" y="701.95" width="26.50" height="10.00" fill="#000" />
<rect x="262.00" y="703.95" width="24.50" height="6.00" fill="url(#bg20)" />
<rect x="262.00" y="711.65" width="25.80" height="10.00" fill="#000" />
<rect x="262.00" y="713.65" width="23.80" height="6.00" fill="url(#bg21)" />
<rect x="262.00" y="721.35" width="28.00" height="10.00" fill="#000" />
<rect x="262.00" y="723.35" width="26.00" height="6.00" fill="url(#bg22)" />
<rect x="262.00" y="731.05" width="32.20" height="10.00" fill="#000" />
<rect x="262.00" y="733.05" width="30.20" height="6.00" fill="url(#bg23)" />
<rect x="262.00" y="740.75" width="26.50" height="10.00" fill="#000" />
<rect x="262.00" y="742.75" width="24.50" height="6.00" fill="url(#bg24)" />
<rect x="262.00" y="783.33" width="40.40" height="10.00" fill="#000" />
<rect x="262.00" y="785.33" width="38.40" height="6.00" fill="url(#bg25)" />
<rect x="262.00" y="793.03" width="22.20" height="10.00" fill="#000" />
<rect x="262.00" y="795.03" width="20.20" height="6.00" fill="url(#bg26)" />
<rect x="262.00" y="802.73" width="49.40" height="10.00" fill="#000" />
<rect x="262.00" y="804.73" width="47.40" height="6.00" fill="url(#bg27)" />
<rect x="262.00" y="812.43" width="32.20" height="10.00" fill="#000" />
<rect x="262.00" y="814.43" width="30.20" height="6.00" fill="url(#bg28)" />
<rect x="262.00" y="822.13" width="45.70" height="10.00" fill="#000" />
<rect x="262.00" y="824.13" width="43.70" height="6.00" fill="url(#bg29)" />
<rect x="262.00" y="831.83" width="40.40" height="10.00" fill="#000" />
<rect x="262.00" y="833.83" width="38.40" height="6.00" fill="url(#bg30)" />
<rect x="262.00" y="931.00" width="67.60" height="10.00" fill="#000" />
<rect x="262.00" y="933.00" width="65.60" height="6.00" fill="url(#bgw)" />
<text x="860.50" y="326.00" font-size="21.80" fill="#e2e2e2" text-anchor="middle" textLength="63.50" lengthAdjust="spacingAndGlyphs" >Delta L</text>
<rect x="776.60" y="334.80" width="205.40" height="398.20" fill="#222222" />
<line x1="776.60" y1="400.60" x2="982.00" y2="400.60" stroke="#9a9a9a" stroke-width="2" />
<line x1="776.60" y1="468.00" x2="982.00" y2="468.00" stroke="#9a9a9a" stroke-width="2" />
<line x1="776.60" y1="536.00" x2="982.00" y2="536.00" stroke="#9a9a9a" stroke-width="2" />
<line x1="776.60" y1="600.60" x2="982.00" y2="600.60" stroke="#9a9a9a" stroke-width="2" />
<line x1="776.60" y1="668.00" x2="982.00" y2="668.00" stroke="#9a9a9a" stroke-width="2" />
<rect x="776.6" y="334.8" width="205.39999999999998" height="398.2" fill="none" stroke="#9a9a9a" stroke-width="2"/>
<line x1="768.60" y1="334.80" x2="776.60" y2="334.80" stroke="#dddddd" stroke-width="2" />
<text x="767.60" y="342.00" font-size="20.93" fill="#e2e2e2" text-anchor="end" >15</text>
<line x1="768.60" y1="400.60" x2="776.60" y2="400.60" stroke="#dddddd" stroke-width="2" />
<text x="767.60" y="407.80" font-size="20.93" fill="#e2e2e2" text-anchor="end" >10</text>
<line x1="768.60" y1="468.00" x2="776.60" y2="468.00" stroke="#dddddd" stroke-width="2" />
<text x="767.60" y="475.20" font-size="20.93" fill="#e2e2e2" text-anchor="end" >5</text>
<line x1="768.60" y1="536.00" x2="776.60" y2="536.00" stroke="#dddddd" stroke-width="2" />
<text x="767.60" y="543.20" font-size="20.93" fill="#e2e2e2" text-anchor="end" >0</text>
<line x1="768.60" y1="600.60" x2="776.60" y2="600.60" stroke="#dddddd" stroke-width="2" />
<text x="767.60" y="607.80" font-size="20.93" fill="#e2e2e2" text-anchor="end" >-5</text>
<line x1="768.60" y1="668.00" x2="776.60" y2="668.00" stroke="#dddddd" stroke-width="2" />
<text x="767.60" y="675.20" font-size="20.93" fill="#e2e2e2" text-anchor="end" >-10</text>
<line x1="768.60" y1="733.00" x2="776.60" y2="733.00" stroke="#dddddd" stroke-width="2" />
<text x="767.60" y="740.20" font-size="20.93" fill="#e2e2e2" text-anchor="end" >-15</text>
<line x1="776.60" y1="733.00" x2="776.60" y2="742.00" stroke="#dddddd" stroke-width="2" />
<line x1="982.00" y1="733.00" x2="982.00" y2="742.00" stroke="#dddddd" stroke-width="2" />
<text x="879.30" y="756.00" font-size="20.93" fill="#e2e2e2" text-anchor="middle" >100%</text>
<rect x="797.40" y="533.20" width="163.30" height="20.00" fill="#000" />
<rect x="799.40" y="535.20" width="159.30" height="16.00" fill="url(#ybar)" />
<text x="1139.70" y="326.00" font-size="21.80" fill="#e2e2e2" text-anchor="middle" textLength="66.50" lengthAdjust="spacingAndGlyphs" >Delta C</text>
<rect x="1055.30" y="334.80" width="206.00" height="398.20" fill="#222222" />
<line x1="1055.30" y1="400.60" x2="1261.30" y2="400.60" stroke="#9a9a9a" stroke-width="2" />
<line x1="1055.30" y1="468.00" x2="1261.30" y2="468.00" stroke="#9a9a9a" stroke-width="2" />
<line x1="1055.30" y1="536.00" x2="1261.30" y2="536.00" stroke="#9a9a9a" stroke-width="2" />
<line x1="1055.30" y1="600.60" x2="1261.30" y2="600.60" stroke="#9a9a9a" stroke-width="2" />
<line x1="1055.30" y1="668.00" x2="1261.30" y2="668.00" stroke="#9a9a9a" stroke-width="2" />
<rect x="1055.3" y="334.8" width="206.0" height="398.2" fill="none" stroke="#9a9a9a" stroke-width="2"/>
<line x1="1047.30" y1="334.80" x2="1055.30" y2="334.80" stroke="#dddddd" stroke-width="2" />
<text x="1046.30" y="342.00" font-size="20.93" fill="#e2e2e2" text-anchor="end" >15</text>
<line x1="1047.30" y1="400.60" x2="1055.30" y2="400.60" stroke="#dddddd" stroke-width="2" />
<text x="1046.30" y="407.80" font-size="20.93" fill="#e2e2e2" text-anchor="end" >10</text>
<line x1="1047.30" y1="468.00" x2="1055.30" y2="468.00" stroke="#dddddd" stroke-width="2" />
<text x="1046.30" y="475.20" font-size="20.93" fill="#e2e2e2" text-anchor="end" >5</text>
<line x1="1047.30" y1="536.00" x2="1055.30" y2="536.00" stroke="#dddddd" stroke-width="2" />
<text x="1046.30" y="543.20" font-size="20.93" fill="#e2e2e2" text-anchor="end" >0</text>
<line x1="1047.30" y1="600.60" x2="1055.30" y2="600.60" stroke="#dddddd" stroke-width="2" />
<text x="1046.30" y="607.80" font-size="20.93" fill="#e2e2e2" text-anchor="end" >-5</text>
<line x1="1047.30" y1="668.00" x2="1055.30" y2="668.00" stroke="#dddddd" stroke-width="2" />
<text x="1046.30" y="675.20" font-size="20.93" fill="#e2e2e2" text-anchor="end" >-10</text>
<line x1="1047.30" y1="733.00" x2="1055.30" y2="733.00" stroke="#dddddd" stroke-width="2" />
<text x="1046.30" y="740.20" font-size="20.93" fill="#e2e2e2" text-anchor="end" >-15</text>
<line x1="1055.30" y1="733.00" x2="1055.30" y2="742.00" stroke="#dddddd" stroke-width="2" />
<line x1="1261.30" y1="733.00" x2="1261.30" y2="742.00" stroke="#dddddd" stroke-width="2" />
<text x="1158.30" y="756.00" font-size="20.93" fill="#e2e2e2" text-anchor="middle" >100%</text>
<rect x="1077.00" y="533.80" width="162.60" height="36.90" fill="#000" />
<rect x="1079.00" y="535.80" width="158.60" height="32.90" fill="url(#ybar)" />
<text x="1418.50" y="326.00" font-size="21.80" fill="#e2e2e2" text-anchor="middle" textLength="66.50" lengthAdjust="spacingAndGlyphs" >Delta H</text>
<rect x="1334.30" y="334.80" width="206.00" height="398.20" fill="#222222" />
<line x1="1334.30" y1="400.60" x2="1540.30" y2="400.60" stroke="#9a9a9a" stroke-width="2" />
<line x1="1334.30" y1="468.00" x2="1540.30" y2="468.00" stroke="#9a9a9a" stroke-width="2" />
<line x1="1334.30" y1="536.00" x2="1540.30" y2="536.00" stroke="#9a9a9a" stroke-width="2" />
<line x1="1334.30" y1="600.60" x2="1540.30" y2="600.60" stroke="#9a9a9a" stroke-width="2" />
<line x1="1334.30" y1="668.00" x2="1540.30" y2="668.00" stroke="#9a9a9a" stroke-width="2" />
<rect x="1334.3" y="334.8" width="206.0" height="398.2" fill="none" stroke="#9a9a9a" stroke-width="2"/>
<line x1="1326.30" y1="334.80" x2="1334.30" y2="334.80" stroke="#dddddd" stroke-width="2" />
<text x="1325.30" y="342.00" font-size="20.93" fill="#e2e2e2" text-anchor="end" >15</text>
<line x1="1326.30" y1="400.60" x2="1334.30" y2="400.60" stroke="#dddddd" stroke-width="2" />
<text x="1325.30" y="407.80" font-size="20.93" fill="#e2e2e2" text-anchor="end" >10</text>
<line x1="1326.30" y1="468.00" x2="1334.30" y2="468.00" stroke="#dddddd" stroke-width="2" />
<text x="1325.30" y="475.20" font-size="20.93" fill="#e2e2e2" text-anchor="end" >5</text>
<line x1="1326.30" y1="536.00" x2="1334.30" y2="536.00" stroke="#dddddd" stroke-width="2" />
<text x="1325.30" y="543.20" font-size="20.93" fill="#e2e2e2" text-anchor="end" >0</text>
<line x1="1326.30" y1="600.60" x2="1334.30" y2="600.60" stroke="#dddddd" stroke-width="2" />
<text x="1325.30" y="607.80" font-size="20.93" fill="#e2e2e2" text-anchor="end" >-5</text>
<line x1="1326.30" y1="668.00" x2="1334.30" y2="668.00" stroke="#dddddd" stroke-width="2" />
<text x="1325.30" y="675.20" font-size="20.93" fill="#e2e2e2" text-anchor="end" >-10</text>
<line x1="1326.30" y1="733.00" x2="1334.30" y2="733.00" stroke="#dddddd" stroke-width="2" />
<text x="1325.30" y="740.20" font-size="20.93" fill="#e2e2e2" text-anchor="end" >-15</text>
<line x1="1334.30" y1="733.00" x2="1334.30" y2="742.00" stroke="#dddddd" stroke-width="2" />
<line x1="1540.30" y1="733.00" x2="1540.30" y2="742.00" stroke="#dddddd" stroke-width="2" />
<text x="1437.30" y="756.00" font-size="20.93" fill="#e2e2e2" text-anchor="middle" >100%</text>
<rect x="1356.00" y="515.40" width="163.00" height="18.80" fill="#000" />
<rect x="1358.00" y="517.40" width="159.00" height="14.80" fill="url(#ybar)" />
<rect x="730.50" y="770.50" width="837.50" height="230.30" fill="#000000" />
<rect x="760.00" y="780.00" width="140.50" height="188.00" fill="#ffffff" />
<rect x="761.70" y="781.70" width="137.10" height="92.30" fill="#bdbfa3" />
<rect x="761.70" y="874.00" width="137.10" height="92.30" fill="#c0c0a3" />
<text x="830.00" y="988.60" font-size="16.86" fill="#f0f0f0" text-anchor="middle" >20%</text>
<rect x="923.00" y="780.00" width="140.50" height="188.00" fill="#ffffff" />
<rect x="924.70" y="781.70" width="137.10" height="92.30" fill="#bdc087" />
<rect x="924.70" y="874.00" width="137.10" height="92.30" fill="#c0bf86" />
<text x="993.00" y="988.60" font-size="16.86" fill="#f0f0f0" text-anchor="middle" >40%</text>
<rect x="1087.00" y="780.00" width="140.50" height="188.00" fill="#ffffff" />
<rect x="1088.70" y="781.70" width="137.10" height="92.30" fill="#bdbd6b" />
<rect x="1088.70" y="874.00" width="137.10" height="92.30" fill="#bfbd69" />
<text x="1157.00" y="988.60" font-size="16.86" fill="#f0f0f0" text-anchor="middle" >60%</text>
<rect x="1250.00" y="780.00" width="140.50" height="188.00" fill="#ffffff" />
<rect x="1251.70" y="781.70" width="137.10" height="92.30" fill="#bcbf4d" />
<rect x="1251.70" y="874.00" width="137.10" height="92.30" fill="#bfbf4b" />
<text x="1320.00" y="988.60" font-size="16.86" fill="#f0f0f0" text-anchor="middle" >80%</text>
<rect x="1414.20" y="780.00" width="140.50" height="188.00" fill="#ffffff" />
<rect x="1415.90" y="781.70" width="137.10" height="92.30" fill="#babc18" />
<rect x="1415.90" y="874.00" width="137.10" height="92.30" fill="#c0c000" />
<text x="1484.20" y="988.60" font-size="16.86" fill="#f0f0f0" text-anchor="middle" >100%</text>
<text transform="translate(748.5,821) rotate(-90)" font-size="16.86" fill="#f0f0f0" text-anchor="middle" textLength="49" lengthAdjust="spacingAndGlyphs">Actual</text>
<text transform="translate(748.5,926.5) rotate(-90)" font-size="16.86" fill="#f0f0f0" text-anchor="middle" textLength="47" lengthAdjust="spacingAndGlyphs">Target</text>
<text x="272.30" y="1066.00" font-size="42.88" fill="#f0f0f0" text-anchor="start" textLength="327.70" lengthAdjust="spacingAndGlyphs" >Avg dE2000: 2.63</text>
<text x="255.00" y="1122.00" font-size="42.88" fill="#f0f0f0" text-anchor="start" textLength="364.30" lengthAdjust="spacingAndGlyphs" >Max dE2000: 14.32</text>
<text x="221.70" y="1190.00" font-size="41.43" fill="#f0f0f0" text-anchor="start" textLength="308.30" lengthAdjust="spacingAndGlyphs" >Current Reading</text>
<text x="221.00" y="1240.00" font-size="33.87" fill="#f0f0f0" text-anchor="start" textLength="143.60" lengthAdjust="spacingAndGlyphs" >x: 0.4145</text>
<text x="442.00" y="1240.00" font-size="33.87" fill="#f0f0f0" text-anchor="start" textLength="144.70" lengthAdjust="spacingAndGlyphs" >y: 0.5019</text>
<text x="221.00" y="1298.00" font-size="34.88" fill="#f0f0f0" text-anchor="start" textLength="135.60" lengthAdjust="spacingAndGlyphs" >fL: 57.56</text>
<text x="221.00" y="1346.00" font-size="34.88" fill="#f0f0f0" text-anchor="start" textLength="223.60" lengthAdjust="spacingAndGlyphs" >cd/m²: 197.21</text>
<text x="802.40" y="1067.60" font-size="20.20" fill="#e2e2e2" text-anchor="start" textLength="116.40" lengthAdjust="spacingAndGlyphs" >RGB Balance</text>
<rect x="704.70" y="1075.80" width="353.90" height="254.00" fill="#222222" />
<line x1="704.70" y1="1139.30" x2="1058.60" y2="1139.30" stroke="#9a9a9a" stroke-width="2" />
<line x1="704.70" y1="1202.80" x2="1058.60" y2="1202.80" stroke="#9a9a9a" stroke-width="2" />
<line x1="704.70" y1="1266.30" x2="1058.60" y2="1266.30" stroke="#9a9a9a" stroke-width="2" />
<rect x="704.7" y="1075.8" width="353.89999999999986" height="254.0" fill="none" stroke="#9a9a9a" stroke-width="2"/>
<line x1="696.70" y1="1075.80" x2="704.70" y2="1075.80" stroke="#dddddd" stroke-width="2" />
<text x="694.70" y="1083.00" font-size="20.93" fill="#e2e2e2" text-anchor="end" >110</text>
<line x1="696.70" y1="1139.30" x2="704.70" y2="1139.30" stroke="#dddddd" stroke-width="2" />
<text x="694.70" y="1146.50" font-size="20.93" fill="#e2e2e2" text-anchor="end" >105</text>
<line x1="696.70" y1="1202.80" x2="704.70" y2="1202.80" stroke="#dddddd" stroke-width="2" />
<text x="694.70" y="1210.00" font-size="20.93" fill="#e2e2e2" text-anchor="end" >100</text>
<line x1="696.70" y1="1266.30" x2="704.70" y2="1266.30" stroke="#dddddd" stroke-width="2" />
<text x="694.70" y="1273.50" font-size="20.93" fill="#e2e2e2" text-anchor="end" >95</text>
<line x1="696.70" y1="1329.80" x2="704.70" y2="1329.80" stroke="#dddddd" stroke-width="2" />
<text x="694.70" y="1337.00" font-size="20.93" fill="#e2e2e2" text-anchor="end" >90</text>
<line x1="704.70" y1="1329.80" x2="704.70" y2="1338.80" stroke="#dddddd" stroke-width="2" />
<line x1="1058.60" y1="1329.80" x2="1058.60" y2="1338.80" stroke="#dddddd" stroke-width="2" />
<text x="882.30" y="1352.60" font-size="20.06" fill="#e2e2e2" text-anchor="middle" >100%</text>
<rect x="739.00" y="1228.90" width="93.20" height="100.90" fill="#000" />
<rect x="741.00" y="1230.90" width="89.20" height="98.90" fill="url(#rbr)" />
<rect x="832.20" y="1218.50" width="94.50" height="111.30" fill="#000" />
<rect x="834.20" y="1220.50" width="90.50" height="109.30" fill="url(#rbg)" />
<rect x="926.70" y="1106.30" width="94.30" height="223.50" fill="#000" />
<rect x="928.70" y="1108.30" width="90.30" height="221.50" fill="url(#rbb)" />
<rect x="1088.00" y="1031.50" width="1029.00" height="40.10" fill="url(#thead)" />
<rect x="1088.00" y="1071.60" width="1029.00" height="36.10" fill="#3f3f3f" />
<rect x="1088.00" y="1107.70" width="1029.00" height="37.00" fill="#808080" />
<rect x="1088.00" y="1144.70" width="1029.00" height="36.00" fill="#3f3f3f" />
<rect x="1088.00" y="1180.70" width="1029.00" height="37.00" fill="#808080" />
<rect x="1088.00" y="1217.70" width="1029.00" height="36.50" fill="#3f3f3f" />
<rect x="1088.00" y="1254.20" width="1029.00" height="36.60" fill="#808080" />
<rect x="1088.00" y="1290.80" width="1029.00" height="36.50" fill="#3f3f3f" />
<rect x="1088.00" y="1327.30" width="1029.00" height="36.00" fill="#808080" />
<rect x="2116.00" y="1031.50" width="2.00" height="331.80" fill="#000" />
<rect x="1087" y="1030.9" width="1461.2" height="334.2" fill="none" stroke="#000" stroke-width="2.2"/>
<rect x="1087" y="1030.9" width="1461.2" height="334.2" fill="none" stroke="#f4f4f4" stroke-width="2.2" stroke-dasharray="2.2 3.65"/>
<text x="1439.30" y="1061.00" font-size="23.26" fill="#f4f4f4" text-anchor="middle" textLength="56.00" lengthAdjust="spacingAndGlyphs" >20%</text>
<text x="1589.30" y="1061.00" font-size="23.26" fill="#f4f4f4" text-anchor="middle" textLength="56.00" lengthAdjust="spacingAndGlyphs" >40%</text>
<text x="1740.30" y="1061.00" font-size="23.26" fill="#f4f4f4" text-anchor="middle" textLength="56.00" lengthAdjust="spacingAndGlyphs" >60%</text>
<text x="1891.30" y="1061.00" font-size="23.26" fill="#f4f4f4" text-anchor="middle" textLength="56.00" lengthAdjust="spacingAndGlyphs" >80%</text>
<text x="2041.00" y="1061.00" font-size="23.26" fill="#f4f4f4" text-anchor="middle" textLength="72.00" lengthAdjust="spacingAndGlyphs" >100%</text>
<text x="1115.30" y="1099.10" font-size="23.69" font-weight="bold" fill="#f2f2f2" text-anchor="start" textLength="120.50" lengthAdjust="spacingAndGlyphs" >x: CIE31</text>
<text x="1373.40" y="1099.10" font-size="23.69" fill="#f2f2f2" text-anchor="start" textLength="93.70" lengthAdjust="spacingAndGlyphs" >0.3311</text>
<text x="1523.60" y="1099.10" font-size="23.69" fill="#f2f2f2" text-anchor="start" textLength="93.70" lengthAdjust="spacingAndGlyphs" >0.3530</text>
<text x="1673.90" y="1099.10" font-size="23.69" fill="#f2f2f2" text-anchor="start" textLength="93.70" lengthAdjust="spacingAndGlyphs" >0.3743</text>
<text x="1824.40" y="1099.10" font-size="23.69" fill="#f2f2f2" text-anchor="start" textLength="93.70" lengthAdjust="spacingAndGlyphs" >0.3954</text>
<text x="1974.80" y="1099.10" font-size="23.69" fill="#f2f2f2" text-anchor="start" textLength="93.70" lengthAdjust="spacingAndGlyphs" >0.4145</text>
<text x="1115.30" y="1135.20" font-size="23.69" font-weight="bold" fill="#f2f2f2" text-anchor="start" textLength="120.50" lengthAdjust="spacingAndGlyphs" >y: CIE31</text>
<text x="1373.40" y="1135.20" font-size="23.69" fill="#f2f2f2" text-anchor="start" textLength="93.70" lengthAdjust="spacingAndGlyphs" >0.3645</text>
<text x="1523.60" y="1135.20" font-size="23.69" fill="#f2f2f2" text-anchor="start" textLength="93.70" lengthAdjust="spacingAndGlyphs" >0.4003</text>
<text x="1673.90" y="1135.20" font-size="23.69" fill="#f2f2f2" text-anchor="start" textLength="93.70" lengthAdjust="spacingAndGlyphs" >0.4356</text>
<text x="1824.40" y="1135.20" font-size="23.69" fill="#f2f2f2" text-anchor="start" textLength="93.70" lengthAdjust="spacingAndGlyphs" >0.4699</text>
<text x="1974.80" y="1135.20" font-size="23.69" fill="#f2f2f2" text-anchor="start" textLength="93.70" lengthAdjust="spacingAndGlyphs" >0.5019</text>
<text x="1115.30" y="1172.20" font-size="23.69" font-weight="bold" fill="#f2f2f2" text-anchor="start" textLength="17.00" lengthAdjust="spacingAndGlyphs" >Y</text>
<text x="1373.40" y="1172.20" font-size="23.69" fill="#f2f2f2" text-anchor="start" textLength="131.50" lengthAdjust="spacingAndGlyphs" >216.2980</text>
<text x="1523.60" y="1172.20" font-size="23.69" fill="#f2f2f2" text-anchor="start" textLength="131.50" lengthAdjust="spacingAndGlyphs" >213.1950</text>
<text x="1673.90" y="1172.20" font-size="23.69" fill="#f2f2f2" text-anchor="start" textLength="131.50" lengthAdjust="spacingAndGlyphs" >208.0086</text>
<text x="1824.40" y="1172.20" font-size="23.69" fill="#f2f2f2" text-anchor="start" textLength="131.50" lengthAdjust="spacingAndGlyphs" >204.6355</text>
<text x="1974.80" y="1172.20" font-size="23.69" fill="#f2f2f2" text-anchor="start" textLength="131.50" lengthAdjust="spacingAndGlyphs" >197.2086</text>
<text x="1115.30" y="1208.20" font-size="23.69" font-weight="bold" fill="#f2f2f2" text-anchor="start" textLength="220.00" lengthAdjust="spacingAndGlyphs" >Target x:CIE31</text>
<text x="1373.40" y="1208.20" font-size="23.69" fill="#f2f2f2" text-anchor="start" textLength="93.70" lengthAdjust="spacingAndGlyphs" >0.3344</text>
<text x="1523.60" y="1208.20" font-size="23.69" fill="#f2f2f2" text-anchor="start" textLength="93.70" lengthAdjust="spacingAndGlyphs" >0.3564</text>
<text x="1673.90" y="1208.20" font-size="23.69" fill="#f2f2f2" text-anchor="start" textLength="93.70" lengthAdjust="spacingAndGlyphs" >0.3773</text>
<text x="1824.40" y="1208.20" font-size="23.69" fill="#f2f2f2" text-anchor="start" textLength="93.70" lengthAdjust="spacingAndGlyphs" >0.3969</text>
<text x="1974.80" y="1208.20" font-size="23.69" fill="#f2f2f2" text-anchor="start" textLength="93.70" lengthAdjust="spacingAndGlyphs" >0.4193</text>
<text x="1115.30" y="1245.20" font-size="23.69" font-weight="bold" fill="#f2f2f2" text-anchor="start" textLength="220.00" lengthAdjust="spacingAndGlyphs" >Target y:CIE31</text>
<text x="1373.40" y="1245.20" font-size="23.69" fill="#f2f2f2" text-anchor="start" textLength="93.70" lengthAdjust="spacingAndGlyphs" >0.3648</text>
<text x="1523.60" y="1245.20" font-size="23.69" fill="#f2f2f2" text-anchor="start" textLength="93.70" lengthAdjust="spacingAndGlyphs" >0.4013</text>
<text x="1673.90" y="1245.20" font-size="23.69" fill="#f2f2f2" text-anchor="start" textLength="93.70" lengthAdjust="spacingAndGlyphs" >0.4358</text>
<text x="1824.40" y="1245.20" font-size="23.69" fill="#f2f2f2" text-anchor="start" textLength="93.70" lengthAdjust="spacingAndGlyphs" >0.4682</text>
<text x="1974.80" y="1245.20" font-size="23.69" fill="#f2f2f2" text-anchor="start" textLength="93.70" lengthAdjust="spacingAndGlyphs" >0.5053</text>
<text x="1115.30" y="1281.70" font-size="23.69" font-weight="bold" fill="#f2f2f2" text-anchor="start" textLength="128.50" lengthAdjust="spacingAndGlyphs" >Target Y</text>
<text x="1373.40" y="1281.70" font-size="23.69" fill="#f2f2f2" text-anchor="start" textLength="131.50" lengthAdjust="spacingAndGlyphs" >217.7018</text>
<text x="1523.60" y="1281.70" font-size="23.69" fill="#f2f2f2" text-anchor="start" textLength="131.50" lengthAdjust="spacingAndGlyphs" >213.8804</text>
<text x="1673.90" y="1281.70" font-size="23.69" fill="#f2f2f2" text-anchor="start" textLength="131.50" lengthAdjust="spacingAndGlyphs" >210.9443</text>
<text x="1824.40" y="1281.70" font-size="23.69" fill="#f2f2f2" text-anchor="start" textLength="131.50" lengthAdjust="spacingAndGlyphs" >208.6401</text>
<text x="1974.80" y="1281.70" font-size="23.69" fill="#f2f2f2" text-anchor="start" textLength="131.50" lengthAdjust="spacingAndGlyphs" >206.4123</text>
<text x="1115.30" y="1318.30" font-size="23.69" font-weight="bold" fill="#f2f2f2" text-anchor="start" textLength="126.00" lengthAdjust="spacingAndGlyphs" >ΔE 2000</text>
<text x="1373.40" y="1318.30" font-size="23.69" fill="#f2f2f2" text-anchor="start" textLength="93.70" lengthAdjust="spacingAndGlyphs" >1.4036</text>
<text x="1523.60" y="1318.30" font-size="23.69" fill="#f2f2f2" text-anchor="start" textLength="93.70" lengthAdjust="spacingAndGlyphs" >0.9352</text>
<text x="1673.90" y="1318.30" font-size="23.69" fill="#f2f2f2" text-anchor="start" textLength="93.70" lengthAdjust="spacingAndGlyphs" >0.8037</text>
<text x="1824.40" y="1318.30" font-size="23.69" fill="#f2f2f2" text-anchor="start" textLength="93.70" lengthAdjust="spacingAndGlyphs" >0.6657</text>
<text x="1974.80" y="1318.30" font-size="23.69" fill="#f2f2f2" text-anchor="start" textLength="93.70" lengthAdjust="spacingAndGlyphs" >1.5090</text>
<text x="1115.30" y="1354.80" font-size="23.69" font-weight="bold" fill="#f2f2f2" text-anchor="start" textLength="101.50" lengthAdjust="spacingAndGlyphs" >ΔE ITP</text>
<text x="1373.40" y="1354.80" font-size="23.69" fill="#f2f2f2" text-anchor="start" textLength="93.70" lengthAdjust="spacingAndGlyphs" >2.0532</text>
<text x="1523.60" y="1354.80" font-size="23.69" fill="#f2f2f2" text-anchor="start" textLength="93.70" lengthAdjust="spacingAndGlyphs" >1.9516</text>
<text x="1673.90" y="1354.80" font-size="23.69" fill="#f2f2f2" text-anchor="start" textLength="93.70" lengthAdjust="spacingAndGlyphs" >1.9929</text>
<text x="1824.40" y="1354.80" font-size="23.69" fill="#f2f2f2" text-anchor="start" textLength="93.70" lengthAdjust="spacingAndGlyphs" >1.9051</text>
<text x="1974.80" y="1354.80" font-size="23.69" fill="#f2f2f2" text-anchor="start" textLength="93.70" lengthAdjust="spacingAndGlyphs" >5.5283</text>
<rect x="1577.00" y="231.00" width="983.00" height="789.30" fill="#1c1c1c" />
<rect x="1587.00" y="241.00" width="962.80" height="769.50" fill="#333333" />
<text x="2068.00" y="267.00" font-size="21.22" fill="#e2e2e2" text-anchor="middle" textLength="117.00" lengthAdjust="spacingAndGlyphs" >CIE 1976 u'v'</text>
<rect x="1639.50" y="273.50" width="906.50" height="696.00" fill="#222222" />
<line x1="1639.50" y1="969.50" x2="1639.50" y2="979.00" stroke="#dddddd" stroke-width="2" />
<text x="1639.50" y="1000.80" font-size="21.22" fill="#e2e2e2" text-anchor="middle" >0</text>
<line x1="1714.82" y1="969.50" x2="1714.82" y2="979.00" stroke="#dddddd" stroke-width="2" />
<text x="1714.82" y="1000.80" font-size="21.22" fill="#e2e2e2" text-anchor="middle" >0.05</text>
<line x1="1790.14" y1="969.50" x2="1790.14" y2="979.00" stroke="#dddddd" stroke-width="2" />
<text x="1790.14" y="1000.80" font-size="21.22" fill="#e2e2e2" text-anchor="middle" >0.1</text>
<line x1="1865.46" y1="969.50" x2="1865.46" y2="979.00" stroke="#dddddd" stroke-width="2" />
<text x="1865.46" y="1000.80" font-size="21.22" fill="#e2e2e2" text-anchor="middle" >0.15</text>
<line x1="1940.78" y1="969.50" x2="1940.78" y2="979.00" stroke="#dddddd" stroke-width="2" />
<text x="1940.78" y="1000.80" font-size="21.22" fill="#e2e2e2" text-anchor="middle" >0.2</text>
<line x1="2016.10" y1="969.50" x2="2016.10" y2="979.00" stroke="#dddddd" stroke-width="2" />
<text x="2016.10" y="1000.80" font-size="21.22" fill="#e2e2e2" text-anchor="middle" >0.25</text>
<line x1="2091.42" y1="969.50" x2="2091.42" y2="979.00" stroke="#dddddd" stroke-width="2" />
<text x="2091.42" y="1000.80" font-size="21.22" fill="#e2e2e2" text-anchor="middle" >0.3</text>
<line x1="2166.74" y1="969.50" x2="2166.74" y2="979.00" stroke="#dddddd" stroke-width="2" />
<text x="2166.74" y="1000.80" font-size="21.22" fill="#e2e2e2" text-anchor="middle" >0.35</text>
<line x1="2242.06" y1="969.50" x2="2242.06" y2="979.00" stroke="#dddddd" stroke-width="2" />
<text x="2242.06" y="1000.80" font-size="21.22" fill="#e2e2e2" text-anchor="middle" >0.4</text>
<line x1="2317.38" y1="969.50" x2="2317.38" y2="979.00" stroke="#dddddd" stroke-width="2" />
<text x="2317.38" y="1000.80" font-size="21.22" fill="#e2e2e2" text-anchor="middle" >0.45</text>
<line x1="2392.70" y1="969.50" x2="2392.70" y2="979.00" stroke="#dddddd" stroke-width="2" />
<text x="2392.70" y="1000.80" font-size="21.22" fill="#e2e2e2" text-anchor="middle" >0.5</text>
<line x1="2468.02" y1="969.50" x2="2468.02" y2="979.00" stroke="#dddddd" stroke-width="2" />
<text x="2468.02" y="1000.80" font-size="21.22" fill="#e2e2e2" text-anchor="middle" >0.55</text>
<line x1="1631.50" y1="969.40" x2="1639.50" y2="969.40" stroke="#dddddd" stroke-width="2" />
<text x="1630.50" y="976.70" font-size="21.22" fill="#e2e2e2" text-anchor="end" >0</text>
<line x1="1631.50" y1="911.62" x2="1639.50" y2="911.62" stroke="#dddddd" stroke-width="2" />
<text x="1630.50" y="918.92" font-size="21.22" fill="#e2e2e2" text-anchor="end" >0.05</text>
<line x1="1631.50" y1="853.84" x2="1639.50" y2="853.84" stroke="#dddddd" stroke-width="2" />
<text x="1630.50" y="861.14" font-size="21.22" fill="#e2e2e2" text-anchor="end" >0.1</text>
<line x1="1631.50" y1="796.06" x2="1639.50" y2="796.06" stroke="#dddddd" stroke-width="2" />
<text x="1630.50" y="803.36" font-size="21.22" fill="#e2e2e2" text-anchor="end" >0.15</text>
<line x1="1631.50" y1="738.28" x2="1639.50" y2="738.28" stroke="#dddddd" stroke-width="2" />
<text x="1630.50" y="745.58" font-size="21.22" fill="#e2e2e2" text-anchor="end" >0.2</text>
<line x1="1631.50" y1="680.50" x2="1639.50" y2="680.50" stroke="#dddddd" stroke-width="2" />
<text x="1630.50" y="687.80" font-size="21.22" fill="#e2e2e2" text-anchor="end" >0.25</text>
<line x1="1631.50" y1="622.72" x2="1639.50" y2="622.72" stroke="#dddddd" stroke-width="2" />
<text x="1630.50" y="630.02" font-size="21.22" fill="#e2e2e2" text-anchor="end" >0.3</text>
<line x1="1631.50" y1="564.94" x2="1639.50" y2="564.94" stroke="#dddddd" stroke-width="2" />
<text x="1630.50" y="572.24" font-size="21.22" fill="#e2e2e2" text-anchor="end" >0.35</text>
<line x1="1631.50" y1="507.16" x2="1639.50" y2="507.16" stroke="#dddddd" stroke-width="2" />
<text x="1630.50" y="514.46" font-size="21.22" fill="#e2e2e2" text-anchor="end" >0.4</text>
<line x1="1631.50" y1="449.38" x2="1639.50" y2="449.38" stroke="#dddddd" stroke-width="2" />
<text x="1630.50" y="456.68" font-size="21.22" fill="#e2e2e2" text-anchor="end" >0.45</text>
<line x1="1631.50" y1="391.60" x2="1639.50" y2="391.60" stroke="#dddddd" stroke-width="2" />
<text x="1630.50" y="398.90" font-size="21.22" fill="#e2e2e2" text-anchor="end" >0.5</text>
<line x1="1631.50" y1="333.82" x2="1639.50" y2="333.82" stroke="#dddddd" stroke-width="2" />
<text x="1630.50" y="341.12" font-size="21.22" fill="#e2e2e2" text-anchor="end" >0.55</text>
<g clip-path="url(#cieclip)" style="isolation:isolate"><path d="M2026.4 950.4 L2019.4 949.9 L1993.1 929.1 L1922.2 868.7 L1856.6 794.9 L1764.2 656.4 L1681.9 493.7 L1644.7 376.5 L1641.6 341.7 L1646.5 317.8 L1658.0 302.7 L1674.3 294.9 L1714.9 291.4 L1758.9 292.7 L1870.1 303.1 L2034.7 321.8 L2247.4 346.1 L2423.1 366.3 L2578.5 384.1 Z" fill="#000"/><path d="M2026.4 950.4 L2019.4 949.9 L1993.1 929.1 L1922.2 868.7 L1856.6 794.9 L1764.2 656.4 L1681.9 493.7 L1644.7 376.5 L1641.6 341.7 L1646.5 317.8 L1658.0 302.7 L1674.3 294.9 L1714.9 291.4 L1758.9 292.7 L1870.1 303.1 L2034.7 321.8 L2247.4 346.1 L2423.1 366.3 L2578.5 384.1 Z" fill="url(#fog)" style="mix-blend-mode:screen"/><path d="M2026.4 950.4 L2019.4 949.9 L1993.1 929.1 L1922.2 868.7 L1856.6 794.9 L1764.2 656.4 L1681.9 493.7 L1644.7 376.5 L1641.6 341.7 L1646.5 317.8 L1658.0 302.7 L1674.3 294.9 L1714.9 291.4 L1758.9 292.7 L1870.1 303.1 L2034.7 321.8 L2247.4 346.1 L2423.1 366.3 L2578.5 384.1 Z" fill="url(#for)" style="mix-blend-mode:screen"/><path d="M2026.4 950.4 L2019.4 949.9 L1993.1 929.1 L1922.2 868.7 L1856.6 794.9 L1764.2 656.4 L1681.9 493.7 L1644.7 376.5 L1641.6 341.7 L1646.5 317.8 L1658.0 302.7 L1674.3 294.9 L1714.9 291.4 L1758.9 292.7 L1870.1 303.1 L2034.7 321.8 L2247.4 346.1 L2423.1 366.3 L2578.5 384.1 Z" fill="url(#fob)" style="mix-blend-mode:screen"/><path d="M2318.4 365.1 L1827.8 319.4 L1903.7 786.9 Z" fill="#000"/><path d="M2318.4 365.1 L1827.8 319.4 L1903.7 786.9 Z" fill="url(#fbr)" style="mix-blend-mode:screen"/><path d="M2318.4 365.1 L1827.8 319.4 L1903.7 786.9 Z" fill="url(#fbg)" style="mix-blend-mode:screen"/><path d="M2318.4 365.1 L1827.8 319.4 L1903.7 786.9 Z" fill="url(#fbb)" style="mix-blend-mode:screen"/><path d="M2318.4 365.1 L1827.8 319.4 L1903.7 786.9 Z" fill="url(#fbw)"/></g>
<rect x="200.00" y="1490.00" width="2360.00" height="62.00" fill="#2e2e2e" />
<path d="M201 1552 V1494 Q201 1490 205 1490 H242 Q246 1490 246 1494 V1552 Z" fill="url(#tile)"/>
<circle cx="223" cy="1498.5" r="7" fill="#666"/><path d="M218.5 1501 h9 l-4.5 -4.5 z" fill="#333"/>
<rect x="206.00" y="1515.00" width="35.00" height="31.00" fill="#ffff00" rx="3"/>
<path d="M251 1552 V1494 Q251 1490 255 1490 H397 Q401 1490 401 1494 V1552 Z" fill="url(#tile)"/>
<rect x="257.00" y="1495.00" width="139.00" height="36.00" fill="#c0c1a5" rx="3"/>
<text x="326.00" y="1546.00" font-size="10.90" fill="#222" text-anchor="middle" >20%</text>
<path d="M404 1552 V1494 Q404 1490 408 1490 H550 Q554 1490 554 1494 V1552 Z" fill="url(#tile)"/>
<rect x="410.00" y="1495.00" width="139.00" height="36.00" fill="#bfc087" rx="3"/>
<text x="479.00" y="1546.00" font-size="10.90" fill="#222" text-anchor="middle" >40%</text>
<path d="M556 1552 V1494 Q556 1490 560 1490 H702 Q706 1490 706 1494 V1552 Z" fill="url(#tile)"/>
<rect x="562.00" y="1495.00" width="139.00" height="36.00" fill="#bebd69" rx="3"/>
<text x="631.00" y="1546.00" font-size="10.90" fill="#222" text-anchor="middle" >60%</text>
<path d="M708 1552 V1494 Q708 1490 712 1490 H854 Q858 1490 858 1494 V1552 Z" fill="url(#tile)"/>
<rect x="714.00" y="1495.00" width="139.00" height="36.00" fill="#bdc04b" rx="3"/>
<text x="783.00" y="1546.00" font-size="10.90" fill="#222" text-anchor="middle" >80%</text>
<path d="M860 1552 V1494 Q860 1490 864 1490 H1006 Q1010 1490 1010 1494 V1552 Z" fill="url(#tilesel)"/>
<rect x="866.00" y="1495.00" width="139.00" height="36.00" fill="#c3c100" rx="3"/>
<text x="935.00" y="1546.00" font-size="10.90" font-weight="bold" fill="#fff" text-anchor="middle" >100%</text>
<rect x="1010.00" y="1490.00" width="1550.00" height="62.00" fill="url(#brp)" />
<rect x="2236.00" y="1490.00" width="324.00" height="62.00" fill="#5a5a5a" />
<rect x="2286.50" y="1490.50" width="44.20" height="29.00" fill="url(#sbtn)" rx="3"/>
<circle cx="2308.5" cy="1511" r="8" fill="#8a8a8a"/>
<rect x="2331.70" y="1490.50" width="44.20" height="29.00" fill="url(#sbtn)" rx="3"/>
<circle cx="2353.7" cy="1511" r="8" fill="#8a8a8a"/>
<rect x="2376.90" y="1490.50" width="44.20" height="29.00" fill="url(#sbtn)" rx="3"/>
<circle cx="2398.9" cy="1511" r="8" fill="#8a8a8a"/>
<rect x="2422.10" y="1490.50" width="44.20" height="29.00" fill="url(#sbtn)" rx="3"/>
<circle cx="2444.1" cy="1511" r="8" fill="#8a8a8a"/>
<rect x="2467.30" y="1490.50" width="44.20" height="29.00" fill="url(#sbtn)" rx="3"/>
<circle cx="2489.3" cy="1511" r="8" fill="#8a8a8a"/>
<rect x="2512.50" y="1490.50" width="44.20" height="29.00" fill="url(#sbtn)" rx="3"/>
<circle cx="2534.5" cy="1511" r="8" fill="#8a8a8a"/>
<rect x="2237.40" y="1509.00" width="47.50" height="43.00" fill="url(#sbtn)" rx="3"/>
<rect x="2246" y="1515" width="28" height="30" rx="4" fill="#9a9a9a" stroke="#222" stroke-width="2.5"/><rect x="2254" y="1523" width="13" height="13" fill="#000"/>
<rect x="2286.50" y="1521.00" width="135.50" height="31.00" fill="url(#btn)" rx="3"/>
<rect x="2423.00" y="1521.00" width="137.00" height="31.00" fill="url(#btn)" rx="3"/>
<line x1="2422.50" y1="1521.00" x2="2422.50" y2="1552.00" stroke="#555" stroke-width="1" />
<circle cx="2317" cy="1535.6" r="9.5" fill="#a2a2a2" stroke="#8a8a8a" stroke-width="1"/><path d="M2318.5 1531 l-4 4.6 l4 4.6 M2322.5 1531 l-4 4.6 l4 4.6" stroke="#333" stroke-width="1.4" fill="none"/>
<circle cx="2530" cy="1535.6" r="9.5" fill="#a2a2a2" stroke="#8a8a8a" stroke-width="1"/><path d="M2525.5 1531 l4 4.6 l-4 4.6 M2529.5 1531 l4 4.6 l-4 4.6" stroke="#333" stroke-width="1.4" fill="none"/>
<text x="2343.80" y="1543.60" font-size="22.38" fill="#2a2a2a" text-anchor="start" textLength="50.50" lengthAdjust="spacingAndGlyphs" >Back</text>
<text x="2451.00" y="1543.60" font-size="22.38" fill="#2a2a2a" text-anchor="start" textLength="51.00" lengthAdjust="spacingAndGlyphs" >Next</text>
</svg>
<canvas id="cie" width="906" height="695" style="left:1640px;top:274px;width:906px;height:695px"></canvas>
<svg width="2560" height="1552" viewBox="0 0 2560 1552" style="pointer-events:none">
<rect x="1639.5" y="273.5" width="906.5" height="696.0" fill="none" stroke="#a0a0a0" stroke-width="2"/>
<rect x="1817.9" y="306.9" width="19" height="19" fill="none" stroke="#ffffff" stroke-width="2"/>
<rect x="1835.1" y="323.7" width="19" height="19" fill="none" stroke="#ffffff" stroke-width="2"/>
<rect x="1852.1" y="340.7" width="19" height="19" fill="none" stroke="#ffffff" stroke-width="2"/>
<rect x="1873.5" y="362.4" width="19" height="19" fill="none" stroke="#ffffff" stroke-width="2"/>
<rect x="1898.4" y="385.9" width="19" height="19" fill="none" stroke="#ffffff" stroke-width="2"/>
<rect x="1839.0" y="431.8" width="19" height="19" fill="none" stroke="#ffffff" stroke-width="2"/>
<rect x="1856.1" y="427.8" width="19" height="19" fill="none" stroke="#ffffff" stroke-width="2"/>
<rect x="1873.5" y="426.0" width="19" height="19" fill="none" stroke="#ffffff" stroke-width="2"/>
<rect x="1891.5" y="422.4" width="19" height="19" fill="none" stroke="#ffffff" stroke-width="2"/>
<rect x="1909.6" y="419.7" width="19" height="19" fill="none" stroke="#ffffff" stroke-width="2"/>
<rect x="1937.1" y="317.6" width="19" height="19" fill="none" stroke="#ffffff" stroke-width="2"/>
<rect x="1934.4" y="335.1" width="19" height="19" fill="none" stroke="#ffffff" stroke-width="2"/>
<rect x="1934.4" y="352.8" width="19" height="19" fill="none" stroke="#ffffff" stroke-width="2"/>
<rect x="1932.8" y="370.5" width="19" height="19" fill="none" stroke="#ffffff" stroke-width="2"/>
<rect x="1930.4" y="391.6" width="19" height="19" fill="none" stroke="#ffffff" stroke-width="2"/>
<rect x="2308.5" y="352.6" width="19" height="19" fill="none" stroke="#ffffff" stroke-width="2"/>
<rect x="2218.0" y="367.7" width="19" height="19" fill="none" stroke="#ffffff" stroke-width="2"/>
<rect x="2140.9" y="381.7" width="19" height="19" fill="none" stroke="#ffffff" stroke-width="2"/>
<rect x="2072.0" y="391.2" width="19" height="19" fill="none" stroke="#ffffff" stroke-width="2"/>
<rect x="1996.7" y="404.4" width="19" height="19" fill="none" stroke="#ffffff" stroke-width="2"/>
<rect x="2089.1" y="575.9" width="19" height="19" fill="none" stroke="#ffffff" stroke-width="2"/>
<rect x="2042.9" y="531.7" width="19" height="19" fill="none" stroke="#ffffff" stroke-width="2"/>
<rect x="2005.7" y="494.8" width="19" height="19" fill="none" stroke="#ffffff" stroke-width="2"/>
<rect x="1978.6" y="466.1" width="19" height="19" fill="none" stroke="#ffffff" stroke-width="2"/>
<rect x="1951.8" y="439.5" width="19" height="19" fill="none" stroke="#ffffff" stroke-width="2"/>
<rect x="1894.9" y="776.5" width="19" height="19" fill="none" stroke="#ffffff" stroke-width="2"/>
<rect x="1906.0" y="654.8" width="19" height="19" fill="none" stroke="#ffffff" stroke-width="2"/>
<rect x="1913.8" y="574.0" width="19" height="19" fill="none" stroke="#ffffff" stroke-width="2"/>
<rect x="1919.9" y="510.8" width="19" height="19" fill="none" stroke="#ffffff" stroke-width="2"/>
<rect x="1923.4" y="458.9" width="19" height="19" fill="none" stroke="#ffffff" stroke-width="2"/>
<rect x="1927" y="416.4" width="19" height="19" fill="none" stroke="#000" stroke-width="2.2"/>
<circle cx="1867.6" cy="319.7" r="6" fill="#10a010" stroke="#000" stroke-width="1.6"/>
<circle cx="1867.6" cy="333.5" r="6" fill="#40b040" stroke="#000" stroke-width="1.6"/>
<circle cx="1867.6" cy="350.9" r="6" fill="#60b060" stroke="#000" stroke-width="1.6"/>
<circle cx="1879" cy="371.9" r="6" fill="#80b880" stroke="#000" stroke-width="1.6"/>
<circle cx="1904" cy="396.7" r="6" fill="#98b498" stroke="#000" stroke-width="1.6"/>
<circle cx="1869.6" cy="437.9" r="6" fill="#10a0a0" stroke="#000" stroke-width="1.6"/>
<circle cx="1869.3" cy="435.2" r="6" fill="#10b8c0" stroke="#000" stroke-width="1.6"/>
<circle cx="1879.4" cy="433.2" r="6" fill="#70b0b0" stroke="#000" stroke-width="1.6"/>
<circle cx="1898.4" cy="429.9" r="6" fill="#90b8b8" stroke="#000" stroke-width="1.6"/>
<circle cx="1915.4" cy="427.9" r="6" fill="#a0b4b4" stroke="#000" stroke-width="1.6"/>
<circle cx="1944.6" cy="329.2" r="6" fill="#c0c000" stroke="#000" stroke-width="1.6"/>
<circle cx="1942.6" cy="343.1" r="6" fill="#c0c050" stroke="#000" stroke-width="1.6"/>
<circle cx="1940.6" cy="360.3" r="6" fill="#c0bc70" stroke="#000" stroke-width="1.6"/>
<circle cx="1938.6" cy="380" r="6" fill="#c0bc88" stroke="#000" stroke-width="1.6"/>
<circle cx="1936.8" cy="402.7" r="6" fill="#c0bca0" stroke="#000" stroke-width="1.6"/>
<circle cx="2200.6" cy="368.2" r="6" fill="#c04040" stroke="#000" stroke-width="1.6"/>
<circle cx="2204.6" cy="364.5" r="6" fill="#cc0000" stroke="#000" stroke-width="1.6"/>
<circle cx="2152.4" cy="389.4" r="6" fill="#c05050" stroke="#000" stroke-width="1.6"/>
<circle cx="2075.5" cy="400.9" r="6" fill="#b06868" stroke="#000" stroke-width="1.6"/>
<circle cx="2000.6" cy="412.3" r="6" fill="#c09090" stroke="#000" stroke-width="1.6"/>
<circle cx="2036.9" cy="520.2" r="6" fill="#b050b0" stroke="#000" stroke-width="1.6"/>
<circle cx="2038.9" cy="516" r="6" fill="#c000c0" stroke="#000" stroke-width="1.6"/>
<circle cx="2013.8" cy="502.7" r="6" fill="#c080c0" stroke="#000" stroke-width="1.6"/>
<circle cx="1984.9" cy="471.8" r="6" fill="#c090c0" stroke="#000" stroke-width="1.6"/>
<circle cx="1958" cy="446.6" r="6" fill="#c0a0c0" stroke="#000" stroke-width="1.6"/>
<circle cx="1892.3" cy="650.6" r="6" fill="#0a0ac0" stroke="#000" stroke-width="1.6"/>
<circle cx="1910" cy="635.9" r="6" fill="#5050b8" stroke="#000" stroke-width="1.6"/>
<circle cx="1921.5" cy="582" r="6" fill="#7070b8" stroke="#000" stroke-width="1.6"/>
<circle cx="1925.3" cy="516.4" r="6" fill="#8888b8" stroke="#000" stroke-width="1.6"/>
<circle cx="1931.2" cy="464.4" r="6" fill="#9898b8" stroke="#000" stroke-width="1.6"/>
<circle cx="1935.2" cy="427.9" r="6" fill="#ffffff" stroke="#000" stroke-width="1.6"/>
<rect x="2232.00" y="751.20" width="307.70" height="211.80" fill="#333333" />
<rect x="2238" y="757" width="297" height="200" fill="url(#insout)"/>
<path d="M2238 777.3 L2535 936 L2535 957 L2238 957 Z" fill="url(#insin)"/>
<rect x="2237" y="756.3" width="298.2" height="201.5" fill="none" stroke="#a0a0a0" stroke-width="2"/>
<rect x="2374.8" y="845.5" width="20" height="20" fill="none" stroke="#fff" stroke-width="2"/>
<circle cx="2356.1" cy="869.3" r="6.3" fill="#c4c000" stroke="#000" stroke-width="1.6"/>
<g fill="none" stroke-linejoin="round" stroke-linecap="round"><path d="M2176.5 1470 L2225.5 1480.5 L2227.3 1511.3 L2187.5 1514.3" stroke="#bdbdbd" stroke-width="7" opacity="0.9"/><path d="M2176.5 1470 L2177.8 1519.5 L2208.8 1534.5 L2262.5 1517.5 L2231.5 1511.8" stroke="#bdbdbd" stroke-width="7" opacity="0.9"/><path d="M2176.5 1470 L2225.5 1480.5 L2227.3 1511.3 L2187.5 1514.3" stroke="#7a262c" stroke-width="4.6"/><path d="M2176.5 1470 L2177.8 1519.5 L2208.8 1534.5 L2262.5 1517.5 L2231.5 1511.8" stroke="#7a262c" stroke-width="4.6"/></g><path d="M2188.9 1487.3 L2196.9 1483.4 L2206.8 1494.3 L2232 1468.6 L2233 1471.5 L2204.3 1507 Z" fill="#2e2e2e" stroke="#bdbdbd" stroke-width="1" stroke-linejoin="round"/>
<g mask="url(#nbm)"><text x="2234" y="1508.3" font-size="37.79" font-weight="bold" textLength="197" lengthAdjust="spacingAndGlyphs" fill="none" stroke="#cfcfcf" stroke-width="5.2" stroke-linejoin="round">NOTEBOOK</text><text x="2433" y="1508.3" font-size="37.79" font-weight="bold" textLength="117" lengthAdjust="spacingAndGlyphs" fill="none" stroke="#cfcfcf" stroke-width="5.2" stroke-linejoin="round">CHECK</text></g>
<g opacity="0.5"><text x="2234" y="1508.3" font-size="37.79" font-weight="bold" textLength="197" lengthAdjust="spacingAndGlyphs" fill="#c81e2a" stroke="#c81e2a" stroke-width="2.6" stroke-linejoin="round">NOTEBOOK</text></g>
<g opacity="0.5"><text x="2433" y="1508.3" font-size="37.79" font-weight="bold" textLength="117" lengthAdjust="spacingAndGlyphs" fill="#000" stroke="#000" stroke-width="2.6" stroke-linejoin="round">CHECK</text></g>
</svg>
<canvas id="inset" width="297" height="200" style="left:2238px;top:757px;width:297px;height:200px"></canvas>
<svg width="2560" height="1552" viewBox="0 0 2560 1552" style="pointer-events:none">
<rect x="2374.8" y="845.5" width="20" height="20" fill="none" stroke="#fff" stroke-width="2"/>
<circle cx="2356.1" cy="869.3" r="6.3" fill="#c4c000" stroke="#000" stroke-width="1.6"/>
</svg>
<script>
(function(){
var cv=document.getElementById('cie'); var ctx=cv.getContext('2d');
var X0=1640, Y0=274, Wc=906, Hc=695;
cv.width=Wc; cv.height=Hc;
var PTS=[[0.25687, 0.01646], [0.25668, 0.01653], [0.2564, 0.01633], [0.256, 0.01633], [0.25577, 0.01594], [0.25526, 0.01587], [0.2545, 0.01593], [0.25365, 0.01602], [0.25222, 0.01689], [0.24963, 0.0191], [0.24609, 0.02262], [0.2411, 0.02782], [0.23475, 0.03489], [0.22664, 0.04365], [0.21612, 0.05495], [0.20329, 0.06889], [0.18766, 0.08711], [0.16898, 0.1119], [0.1441, 0.15099], [0.11467, 0.20444], [0.08281, 0.27083], [0.05214, 0.34271], [0.02815, 0.41167], [0.01187, 0.46984], [0.00346, 0.51307], [0.00142, 0.54316], [0.00463, 0.56384], [0.01227, 0.57697], [0.02312, 0.58367], [0.036, 0.58614], [0.05007, 0.58675], [0.06433, 0.58653], [0.07923, 0.58562], [0.09526, 0.58411], [0.1127, 0.58207], [0.13189, 0.57955], [0.15311, 0.57658], [0.1766, 0.57319], [0.20257, 0.56936], [0.23115, 0.5651], [0.26234, 0.56044], [0.29594, 0.55542], [0.33148, 0.55012], [0.36808, 0.54463], [0.40351, 0.53934], [0.43798, 0.53419], [0.46913, 0.52956], [0.4967, 0.52544], [0.52021, 0.52191], [0.53993, 0.51898], [0.55648, 0.51651], [0.57087, 0.51436], [0.58302, 0.51253], [0.59297, 0.51105], [0.60047, 0.50993], [0.60636, 0.50905], [0.6108, 0.50838], [0.61375, 0.50794], [0.61614, 0.50758], [0.61995, 0.50701], [0.62164, 0.50675], [0.62337, 0.5065]];
function colorUV(u,v){
  var d=6*u-16*v+12; var x=9*u/d, y=4*v/d;
  var X=x/y, Y=1, Z=(1-x-y)/y;
  var r=3.2406*X-1.5372*Y-0.4986*Z, g=-0.9689*X+1.8758*Y+0.0415*Z, b=0.0557*X-0.2040*Y+1.0570*Z;
  return rgbn(r,g,b);
}
function rgbn(r,g,b){
  var k=1;
  if(r<0||g<0||b<0){ k=0.6; if(r<0)r=0; if(g<0)g=0; if(b<0)b=0; }
  var m=Math.max(r,g,b); if(m<=0) return [0,0,0];
  return [255*k*r/m,255*k*g/m,255*k*b/m];
}
var img=ctx.createImageData(Wc,Hc); var D=img.data;
for(var j=0;j<Hc;j++){
  var v=(969.4-(Y0+j+0.5))/1155.6;
  for(var i=0;i<Wc;i++){
    var u=(X0+i+0.5-1639.5)/1506.4;
    var c=colorUV(u,Math.max(v,0.001));
    var p=(j*Wc+i)*4; D[p]=c[0]; D[p+1]=c[1]; D[p+2]=c[2]; D[p+3]=255;
  }
}
var off=document.createElement('canvas'); off.width=Wc; off.height=Hc;
off.getContext('2d').putImageData(img,0,0);
ctx.fillStyle='#222222'; ctx.fillRect(0,0,Wc,Hc);
ctx.save(); ctx.beginPath();
var P=[]; for(var k=0;k<PTS.length;k++){ P.push([1639.5+PTS[k][0]*1506.4-X0, 969.4-PTS[k][1]*1155.6-Y0]); }
ctx.moveTo(P[0][0],P[0][1]);
for(var k=0;k<P.length-1;k++){
  var p0=P[Math.max(k-1,0)], p1=P[k], p2=P[k+1], p3=P[Math.min(k+2,P.length-1)];
  for(var t=1;t<=12;t++){
    var s=t/12, s2=s*s, s3=s2*s;
    var x=0.5*((2*p1[0])+(-p0[0]+p2[0])*s+(2*p0[0]-5*p1[0]+4*p2[0]-p3[0])*s2+(-p0[0]+3*p1[0]-3*p2[0]+p3[0])*s3);
    var y=0.5*((2*p1[1])+(-p0[1]+p2[1])*s+(2*p0[1]-5*p1[1]+4*p2[1]-p3[1])*s2+(-p0[1]+3*p1[1]-3*p2[1]+p3[1])*s3);
    ctx.lineTo(x,y);
  }
}
ctx.closePath(); ctx.clip();
ctx.drawImage(off,0,0); ctx.restore();
// inset in xy space
var cv2=document.getElementById('inset'); var c2=cv2.getContext('2d');
var IW=297, IH=200; cv2.width=IW; cv2.height=IH;
var im2=c2.createImageData(IW,IH); var E=im2.data;
for(var j=0;j<IH;j++){
  var y=0.5053+(855.4-(757+j+0.5))/4088;
  for(var i=0;i<IW;i++){
    var x=0.4193+((2238+i+0.5)-2384.7)/5958;
    var X=x/y, Z=(1-x-y)/y;
    var r=3.2406*X-1.5372-0.4986*Z, g=-0.9689*X+1.8758+0.0415*Z, b=0.0557*X-0.2040+1.0570*Z;
    var c=rgbn(r,g,b);
    var p=(j*IW+i)*4; E[p]=c[0]; E[p+1]=c[1]; E[p+2]=c[2]; E[p+3]=255;
  }
}
c2.putImageData(im2,0,0);
})();
</script>
</body></html>
